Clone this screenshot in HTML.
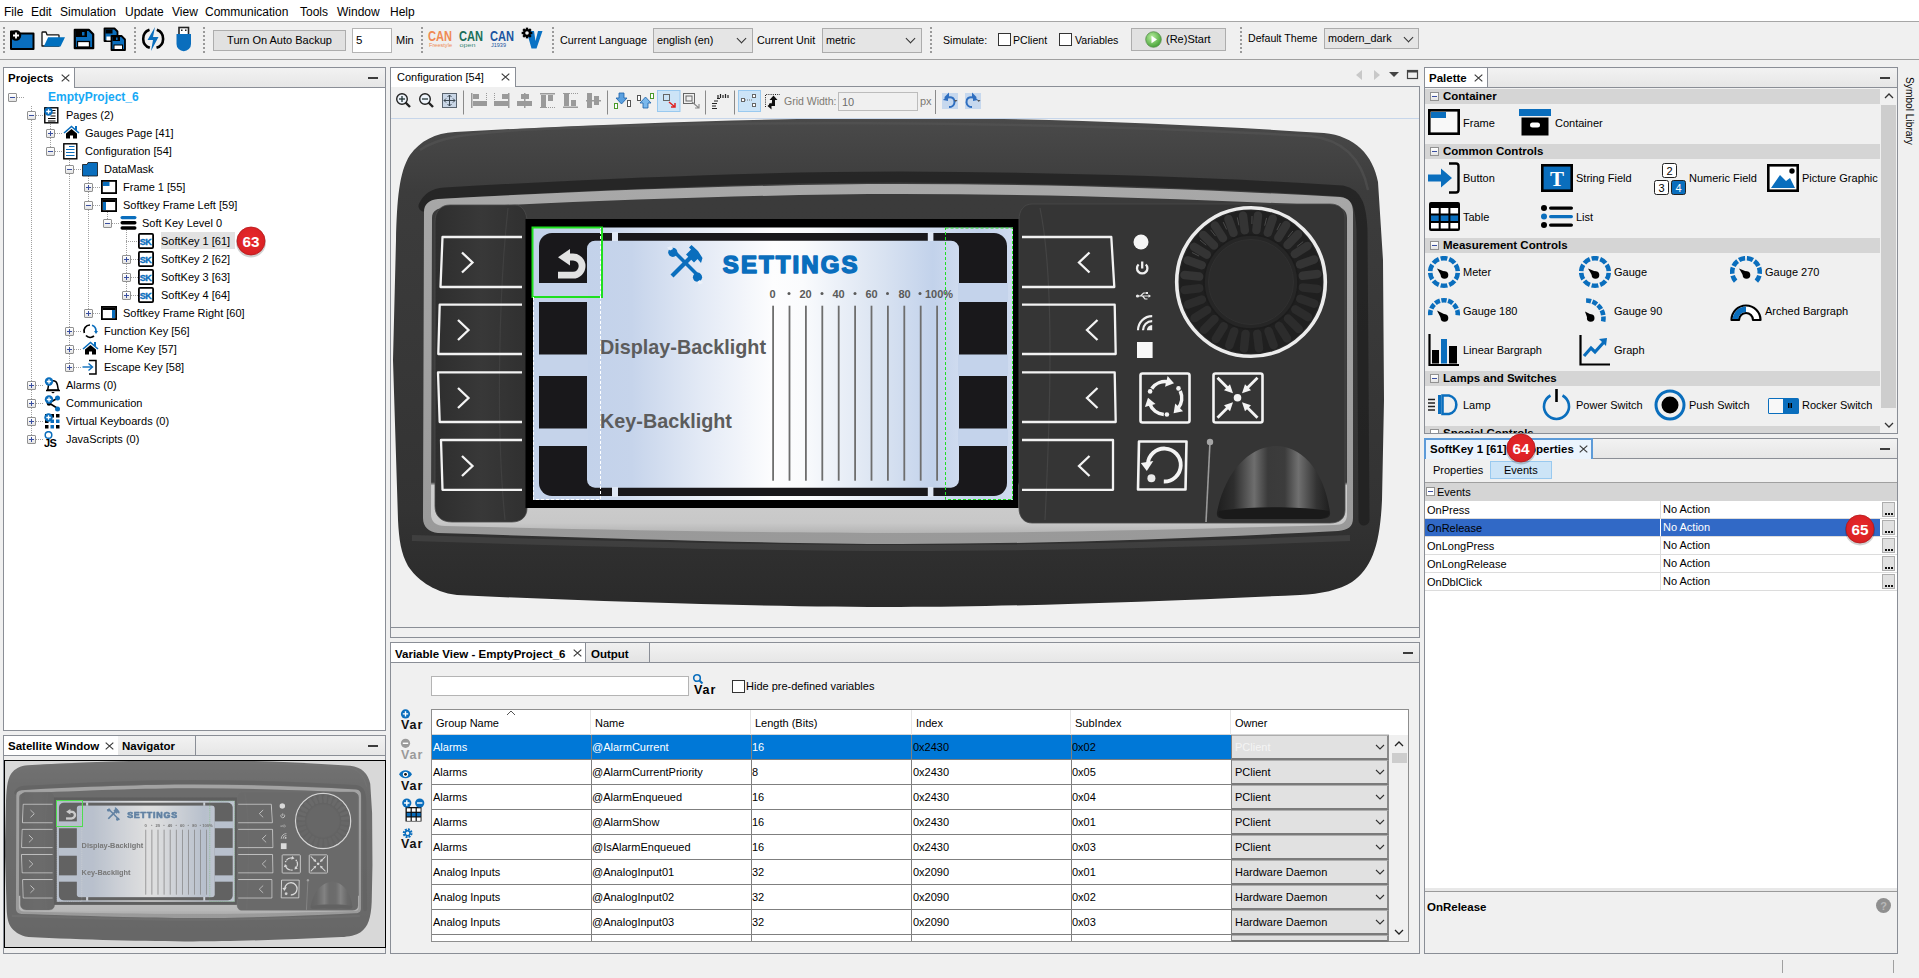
<!DOCTYPE html>
<html><head><meta charset="utf-8">
<style>
*{box-sizing:border-box}
html,body{margin:0;padding:0}
body{width:1919px;height:978px;background:#f0f0f0;position:relative;overflow:hidden;font-family:"Liberation Sans",sans-serif;font-size:11px;color:#000}
.a{position:absolute}
.t{position:absolute;white-space:nowrap;line-height:14px}
.pnl{position:absolute;border:1px solid #8a8e96;background:#fff}
.tabbar{position:absolute;left:0;right:0;top:0;height:20px;background:linear-gradient(#f2f2f2,#e6e6e6);border-bottom:1px solid #8a8e96}
.tab{position:absolute;top:0;height:20px;background:#fff;border-right:1px solid #8a8e96;font-weight:bold;font-size:11.5px;line-height:21px;padding-left:4px;white-space:nowrap}
.tab .x{position:absolute;top:0;font-weight:normal;font-size:13px}
.min{position:absolute;width:10px;height:2px;background:#3c3c3c}
.grip{position:absolute;width:2px;background:repeating-linear-gradient(#9a9a9a 0 2px,transparent 2px 4px)}
.btn{position:absolute;border:1px solid #adadad;background:#e1e1e1;text-align:center;font-size:12px}
.inp{position:absolute;border:1px solid #b4b4b4;background:#fff;font-size:12px;padding-left:3px}
.sel{position:absolute;border:1px solid #acacac;background:#e5e5e5;font-size:12px;padding-left:3px}
.chev{position:absolute;width:7px;height:7px;border-right:1px solid #333;border-bottom:1px solid #333;transform:rotate(45deg)}
.cb{position:absolute;width:13px;height:13px;border:1px solid #333;background:#fff}
</style></head>
<body>
<!-- MENU BAR -->
<div class="a" style="left:0;top:0;width:1919px;height:22px;background:#fff;border-bottom:1px solid #a6a6a6"></div>
<div class="t" style="left:4px;top:5px;font-size:12px">File</div>
<div class="t" style="left:31px;top:5px;font-size:12px">Edit</div>
<div class="t" style="left:60px;top:5px;font-size:12px">Simulation</div>
<div class="t" style="left:125px;top:5px;font-size:12px">Update</div>
<div class="t" style="left:172px;top:5px;font-size:12px">View</div>
<div class="t" style="left:205px;top:5px;font-size:12px">Communication</div>
<div class="t" style="left:300px;top:5px;font-size:12px">Tools</div>
<div class="t" style="left:337px;top:5px;font-size:12px">Window</div>
<div class="t" style="left:390px;top:5px;font-size:12px">Help</div>

<!-- TOOLBAR -->
<div class="a" style="left:0;top:59px;width:1919px;height:1px;background:#a0a0a0"></div>

<div class="grip" style="left:3px;top:27px;height:26px"></div>
<svg class="a" style="left:9px;top:27px" width="27" height="24" viewBox="0 0 27 24">
 <path d="M2 4.5 h7 l2 2 h13.5 v15.5 h-22.5z" fill="#0a6ebd" stroke="#000" stroke-width="2" stroke-linejoin="round"/>
 <circle cx="7" cy="8.5" r="5.2" fill="#000"/>
 <path d="M7 5.5v6M4 8.5h6" stroke="#fff" stroke-width="1.8"/>
</svg>
<svg class="a" style="left:40px;top:29px" width="26" height="20" viewBox="40 29 26 20">
 <path d="M42 46 V32.8 Q42 32 42.8 32 H46 L47 34.8 H58.2 Q59 34.8 59 35.6 V46z" fill="#fff" stroke="#111" stroke-width="1.3" stroke-linejoin="round"/>
 <path d="M43.8 46.6 L48.1 37.2 H65 L60.5 46.6z" fill="#0070bf"/>
</svg>
<svg class="a" style="left:73px;top:28px" width="22" height="22" viewBox="0 0 22 22">
 <path d="M1.8 1.8 h14 l4.4 4.4 v14 h-18.4z" fill="#0a6ebd" stroke="#000" stroke-width="2.2" stroke-linejoin="round"/>
 <rect x="3" y="3" width="11" height="6" fill="#000"/><rect x="9" y="4" width="2.5" height="3.5" fill="#0a6ebd"/>
 <rect x="4.5" y="13.5" width="12" height="5.5" fill="#fff" stroke="#000" stroke-width="1.3"/>
</svg>
<svg class="a" style="left:103px;top:27px" width="25" height="25" viewBox="0 0 25 25">
 <path d="M1.5 1.5 h10 l3 3 v9.5 h-13z" fill="#0a6ebd" stroke="#000" stroke-width="1.8" stroke-linejoin="round"/>
 <rect x="2.5" y="2.5" width="7" height="4" fill="#000"/>
 <rect x="3.5" y="9.5" width="5" height="4" fill="#fff"/>
 <path d="M8.5 9 h10 l3.5 3.5 v10.5 h-13.5z" fill="#0a6ebd" stroke="#000" stroke-width="1.8" stroke-linejoin="round"/>
 <rect x="9.5" y="10" width="7.5" height="4" fill="#000"/><rect x="13" y="10.5" width="1.6" height="2.5" fill="#0a6ebd"/>
 <rect x="11" y="18" width="8.5" height="4.5" fill="#fff" stroke="#000" stroke-width="1"/>
</svg>
<div class="grip" style="left:134px;top:27px;height:26px"></div>
<svg class="a" style="left:141px;top:26px" width="25" height="26" viewBox="0 0 25 26">
 <path d="M8.5 3.8 A9.5 9.5 0 0 0 8.8 21.8" fill="none" stroke="#000" stroke-width="2.6"/>
 <path d="M15.8 3.8 A9.5 9.5 0 0 1 15.5 21.8" fill="none" stroke="#000" stroke-width="2.6"/>
 <path d="M14 1 L6.5 14 H12 L10 25 L17.5 11 H12z" fill="#0a6ebd"/>
</svg>
<svg class="a" style="left:176px;top:26px" width="16" height="26" viewBox="0 0 16 26">
 <rect x="3" y="1.5" width="9.5" height="8" fill="#fff" stroke="#222" stroke-width="1.6"/>
 <rect x="5" y="3.5" width="1.5" height="1.5" fill="#222"/><rect x="9" y="3.5" width="1.5" height="1.5" fill="#222"/>
 <path d="M0.5 8 H15 V18 A7.2 7.2 0 0 1 0.5 18z" fill="#0a6ebd"/>
</svg>
<div class="grip" style="left:203px;top:27px;height:26px"></div>
<div class="btn" style="left:213px;top:30px;width:133px;height:21px;line-height:19px;font-size:11px">Turn On Auto Backup</div>
<div class="inp" style="left:352px;top:28px;width:40px;height:25px;line-height:23px;font-size:11.5px">5</div>
<div class="t" style="left:396px;top:33px;font-size:11px">Min</div>
<div class="grip" style="left:421px;top:27px;height:26px"></div>
<svg class="a" style="left:420px;top:24px" width="130" height="32" viewBox="420 24 130 32">
 <g font-family="Liberation Sans" font-weight="bold" letter-spacing="0">
 <text x="428" y="41.2" font-size="14" fill="#ef8a54" textLength="24" lengthAdjust="spacingAndGlyphs">CAN</text>
 <text x="429" y="46.5" font-size="5.6" font-weight="normal" fill="#ef8a54" textLength="23" lengthAdjust="spacingAndGlyphs">Freestyle</text>
 <text x="459" y="41.2" font-size="14" fill="#1a6f5a" textLength="24" lengthAdjust="spacingAndGlyphs">CAN</text>
 <text x="459.5" y="46.5" font-size="6" font-weight="normal" fill="#3f8a78" textLength="16" lengthAdjust="spacingAndGlyphs">open</text>
 <text x="490" y="41.2" font-size="14" fill="#1b55a0" textLength="24" lengthAdjust="spacingAndGlyphs">CAN</text>
 <text x="491" y="46.5" font-size="6" font-weight="normal" fill="#1b55a0" textLength="15" lengthAdjust="spacingAndGlyphs">J1939</text>
 </g>
 <path d="M526.5 31 H534 L535.5 41 L538 31 H542.5 L536.5 48.5 H531.5z" fill="#0a72c4"/>
 <g transform="translate(527,33) scale(0.85)" fill="#000"><rect x="-1.4" y="-6.3" width="2.8" height="3" transform="rotate(0)"/><rect x="-1.4" y="-6.3" width="2.8" height="3" transform="rotate(45)"/><rect x="-1.4" y="-6.3" width="2.8" height="3" transform="rotate(90)"/><rect x="-1.4" y="-6.3" width="2.8" height="3" transform="rotate(135)"/><rect x="-1.4" y="-6.3" width="2.8" height="3" transform="rotate(180)"/><rect x="-1.4" y="-6.3" width="2.8" height="3" transform="rotate(225)"/><rect x="-1.4" y="-6.3" width="2.8" height="3" transform="rotate(270)"/><rect x="-1.4" y="-6.3" width="2.8" height="3" transform="rotate(315)"/><circle r="4.6"/></g>
 <circle cx="527" cy="33" r="1.8" fill="#f0f0f0"/>
</svg>
<div class="grip" style="left:552px;top:27px;height:26px"></div>
<div class="t" style="left:560px;top:33px;font-size:10.8px">Current Language</div>
<div class="sel" style="left:653px;top:28px;width:100px;height:25px;line-height:23px;font-size:10.8px">english (en)<div class="chev" style="left:84px;top:6px"></div></div>
<div class="t" style="left:757px;top:33px;font-size:10.8px">Current Unit</div>
<div class="sel" style="left:822px;top:28px;width:100px;height:25px;line-height:23px;font-size:10.8px">metric<div class="chev" style="left:84px;top:6px"></div></div>
<div class="grip" style="left:930px;top:27px;height:26px"></div>
<div class="t" style="left:943px;top:33px;font-size:10.6px">Simulate:</div>
<div class="cb" style="left:998px;top:33px"></div>
<div class="t" style="left:1013px;top:33px;font-size:10.6px">PClient</div>
<div class="cb" style="left:1059px;top:33px"></div>
<div class="t" style="left:1075px;top:33px;font-size:10.6px">Variables</div>
<div class="btn" style="left:1131px;top:28px;width:95px;height:23px;line-height:21px;text-align:left;padding-left:34px;font-size:11px">(Re)Start</div>
<svg class="a" style="left:1145px;top:31px" width="17" height="17" viewBox="0 0 17 17">
 <defs><radialGradient id="gg" cx="0.4" cy="0.35" r="0.7"><stop offset="0" stop-color="#b8eea0"/><stop offset="1" stop-color="#3f9e2f"/></radialGradient></defs>
 <circle cx="8.5" cy="8.5" r="7.8" fill="url(#gg)" stroke="#5a8f50" stroke-width="0.8"/>
 <path d="M6.5 4.8 L12 8.5 L6.5 12.2z" fill="#fff"/>
</svg>
<div class="grip" style="left:1240px;top:27px;height:26px"></div>
<div class="t" style="left:1248px;top:31px;font-size:10.6px">Default Theme</div>
<div class="sel" style="left:1324px;top:28px;width:95px;height:21px;line-height:19px;font-size:10.8px">modern_dark<div class="chev" style="left:80px;top:5px"></div></div>


<!-- PROJECTS PANEL -->
<div class="pnl" id="projects" style="left:3px;top:67px;width:383px;height:664px">
  <div class="tabbar"></div>
  <div class="tab" style="left:0;width:71px">Projects</div><svg class="a"  style="left:57px;top:6px" width="9" height="8" viewBox="0 0 9.3 8.5"><path d="M0.6 0.6 L8.7 7.9 M8.7 0.6 L0.6 7.9" stroke="#3a3a3a" stroke-width="1.25"/></svg>
  <div class="min" style="left:364px;top:9px"></div>
</div>

<!-- SATELLITE -->
<div class="pnl" id="sat" style="left:3px;top:735px;width:383px;height:219px;background:#f0f0f0">
  <div class="tabbar" style="height:20px"></div>
  <div class="tab" style="left:0;width:115px;height:19px;line-height:20px">Satellite Window</div><svg class="a" style="left:101px;top:6px" width="9" height="8" viewBox="0 0 9.3 8.5"><path d="M0.6 0.6 L8.7 7.9 M8.7 0.6 L0.6 7.9" stroke="#3a3a3a" stroke-width="1.25"/></svg>
  <div class="tab" style="left:114px;width:78px;height:19px;line-height:20px;background:linear-gradient(#f2f2f2,#e6e6e6)">Navigator</div>
  <div class="min" style="left:364px;top:9px"></div>
</div>

<!-- CONFIG EDITOR -->
<div class="pnl" id="config" style="left:390px;top:86px;width:1030px;height:552px;background:#f0f0f0"></div><div class="a" style="left:391px;top:627px;width:1028px;height:1px;background:#8a8e96"></div>

<!-- VARIABLE VIEW -->
<div class="pnl" id="var" style="left:390px;top:642px;width:1030px;height:312px;background:#f0f0f0">
  <div class="tabbar"></div>
</div>

<!-- PALETTE -->
<div class="pnl" id="palette" style="left:1424px;top:67px;width:474px;height:367px;background:#f0f0f0">
  <div class="tabbar"></div>
</div>

<!-- PROPERTIES -->
<div class="pnl" id="props" style="left:1424px;top:438px;width:474px;height:516px;background:#f0f0f0">
  <div class="tabbar"></div>
</div>

<!--TREE-->
<div class="a" style="left:31px;top:106px;width:1px;height:334px;background:repeating-linear-gradient(#a0a0a0 0 1px,transparent 1px 2px)"></div>
<div class="a" style="left:50px;top:122px;width:1px;height:30px;background:repeating-linear-gradient(#a0a0a0 0 1px,transparent 1px 2px)"></div>
<div class="a" style="left:69px;top:158px;width:1px;height:210px;background:repeating-linear-gradient(#a0a0a0 0 1px,transparent 1px 2px)"></div>
<div class="a" style="left:88px;top:176px;width:1px;height:138px;background:repeating-linear-gradient(#a0a0a0 0 1px,transparent 1px 2px)"></div>
<div class="a" style="left:107px;top:212px;width:1px;height:12px;background:repeating-linear-gradient(#a0a0a0 0 1px,transparent 1px 2px)"></div>
<div class="a" style="left:126px;top:230px;width:1px;height:66px;background:repeating-linear-gradient(#a0a0a0 0 1px,transparent 1px 2px)"></div>
<div class="a" style="left:13px;top:97px;width:11px;height:1px;background:repeating-linear-gradient(90deg,#a0a0a0 0 1px,transparent 1px 2px)"></div>
<div class="a" style="left:32px;top:115px;width:11px;height:1px;background:repeating-linear-gradient(90deg,#a0a0a0 0 1px,transparent 1px 2px)"></div>
<div class="a" style="left:51px;top:133px;width:11px;height:1px;background:repeating-linear-gradient(90deg,#a0a0a0 0 1px,transparent 1px 2px)"></div>
<div class="a" style="left:51px;top:151px;width:11px;height:1px;background:repeating-linear-gradient(90deg,#a0a0a0 0 1px,transparent 1px 2px)"></div>
<div class="a" style="left:70px;top:169px;width:11px;height:1px;background:repeating-linear-gradient(90deg,#a0a0a0 0 1px,transparent 1px 2px)"></div>
<div class="a" style="left:89px;top:187px;width:11px;height:1px;background:repeating-linear-gradient(90deg,#a0a0a0 0 1px,transparent 1px 2px)"></div>
<div class="a" style="left:89px;top:205px;width:11px;height:1px;background:repeating-linear-gradient(90deg,#a0a0a0 0 1px,transparent 1px 2px)"></div>
<div class="a" style="left:108px;top:223px;width:11px;height:1px;background:repeating-linear-gradient(90deg,#a0a0a0 0 1px,transparent 1px 2px)"></div>
<div class="a" style="left:126px;top:241px;width:12px;height:1px;background:repeating-linear-gradient(90deg,#a0a0a0 0 1px,transparent 1px 2px)"></div>
<div class="a" style="left:127px;top:259px;width:11px;height:1px;background:repeating-linear-gradient(90deg,#a0a0a0 0 1px,transparent 1px 2px)"></div>
<div class="a" style="left:127px;top:277px;width:11px;height:1px;background:repeating-linear-gradient(90deg,#a0a0a0 0 1px,transparent 1px 2px)"></div>
<div class="a" style="left:127px;top:295px;width:11px;height:1px;background:repeating-linear-gradient(90deg,#a0a0a0 0 1px,transparent 1px 2px)"></div>
<div class="a" style="left:89px;top:313px;width:11px;height:1px;background:repeating-linear-gradient(90deg,#a0a0a0 0 1px,transparent 1px 2px)"></div>
<div class="a" style="left:70px;top:331px;width:11px;height:1px;background:repeating-linear-gradient(90deg,#a0a0a0 0 1px,transparent 1px 2px)"></div>
<div class="a" style="left:70px;top:349px;width:11px;height:1px;background:repeating-linear-gradient(90deg,#a0a0a0 0 1px,transparent 1px 2px)"></div>
<div class="a" style="left:70px;top:367px;width:11px;height:1px;background:repeating-linear-gradient(90deg,#a0a0a0 0 1px,transparent 1px 2px)"></div>
<div class="a" style="left:32px;top:385px;width:11px;height:1px;background:repeating-linear-gradient(90deg,#a0a0a0 0 1px,transparent 1px 2px)"></div>
<div class="a" style="left:32px;top:403px;width:11px;height:1px;background:repeating-linear-gradient(90deg,#a0a0a0 0 1px,transparent 1px 2px)"></div>
<div class="a" style="left:32px;top:421px;width:11px;height:1px;background:repeating-linear-gradient(90deg,#a0a0a0 0 1px,transparent 1px 2px)"></div>
<div class="a" style="left:32px;top:439px;width:11px;height:1px;background:repeating-linear-gradient(90deg,#a0a0a0 0 1px,transparent 1px 2px)"></div>
<div class="a" style="left:8px;top:93px;width:9px;height:9px;border:1px solid #919191;border-radius:1px;background:linear-gradient(#fff,#e4e4e4)"><div class="a" style="left:1px;top:3px;width:5px;height:1px;background:#3a4fa0"></div></div>
<div class="t" style="left:48px;top:90px;font-size:12px;font-weight:bold;color:#17a9f5">EmptyProject_6</div>
<div class="a" style="left:27px;top:111px;width:9px;height:9px;border:1px solid #919191;border-radius:1px;background:linear-gradient(#fff,#e4e4e4)"><div class="a" style="left:1px;top:3px;width:5px;height:1px;background:#3a4fa0"></div></div>
<svg class="a" style="left:44px;top:107px" width="17" height="17" viewBox="0 0 17 17"><rect x="0.8" y="0.8" width="13" height="15" fill="#fff" stroke="#000" stroke-width="1.4"/><path d="M4 11.5h7.5M4 14h7.5M6.5 9h5M7 6h4.5M7 3.5h4.5" stroke="#000" stroke-width="1.1"/><circle cx="4.5" cy="4.5" r="4.2" fill="#0a6ebd"/><path d="M4.5 2.2v4.6M2.2 4.5h4.6" stroke="#fff" stroke-width="1.3"/></svg>
<div class="t" style="left:66px;top:108px;font-size:11px">Pages (2)</div>
<div class="a" style="left:46px;top:129px;width:9px;height:9px;border:1px solid #919191;border-radius:1px;background:linear-gradient(#fff,#e4e4e4)"><div class="a" style="left:1px;top:3px;width:5px;height:1px;background:#3a4fa0"></div><div class="a" style="left:3px;top:1px;width:1px;height:5px;background:#3a4fa0"></div></div>
<svg class="a" style="left:63px;top:125px" width="17" height="17" viewBox="0 0 17 17"><path d="M1 8 L8.5 1.5 L16 8" fill="none" stroke="#0a6ebd" stroke-width="1.6"/><rect x="12" y="1" width="2" height="4" fill="#0a6ebd"/><path d="M3 8.5 L8.5 4 L14 8.5 V13.5 H10 V10.5 H7 V13.5 H3z" fill="#000"/></svg>
<div class="t" style="left:85px;top:126px;font-size:11px">Gauges Page [41]</div>
<div class="a" style="left:46px;top:147px;width:9px;height:9px;border:1px solid #919191;border-radius:1px;background:linear-gradient(#fff,#e4e4e4)"><div class="a" style="left:1px;top:3px;width:5px;height:1px;background:#3a4fa0"></div></div>
<svg class="a" style="left:63px;top:143px" width="17" height="17" viewBox="0 0 17 17"><rect x="0.8" y="0.8" width="13" height="15" fill="#fff" stroke="#000" stroke-width="1.4"/><path d="M6 3.5h5.5M3 6.5h8.5M3 9.5h8.5M3 12.5h8.5" stroke="#0a6ebd" stroke-width="1.1"/></svg>
<div class="t" style="left:85px;top:144px;font-size:11px">Configuration [54]</div>
<div class="a" style="left:65px;top:165px;width:9px;height:9px;border:1px solid #919191;border-radius:1px;background:linear-gradient(#fff,#e4e4e4)"><div class="a" style="left:1px;top:3px;width:5px;height:1px;background:#3a4fa0"></div></div>
<svg class="a" style="left:82px;top:161px" width="17" height="17" viewBox="0 0 17 17"><path d="M0.5 3.5 L5 3.5 L6 1.5 H15.5 V15 H0.5z" fill="#0a6ebd" stroke="#111" stroke-width="0.8"/></svg>
<div class="t" style="left:104px;top:162px;font-size:11px">DataMask</div>
<div class="a" style="left:84px;top:183px;width:9px;height:9px;border:1px solid #919191;border-radius:1px;background:linear-gradient(#fff,#e4e4e4)"><div class="a" style="left:1px;top:3px;width:5px;height:1px;background:#3a4fa0"></div><div class="a" style="left:3px;top:1px;width:1px;height:5px;background:#3a4fa0"></div></div>
<svg class="a" style="left:101px;top:179px" width="17" height="17" viewBox="0 0 17 17"><rect x="0.9" y="1.9" width="14.2" height="12.2" fill="#fff" stroke="#000" stroke-width="1.8"/><rect x="2" y="3" width="6.5" height="4" fill="#0a6ebd"/></svg>
<div class="t" style="left:123px;top:180px;font-size:11px">Frame 1 [55]</div>
<div class="a" style="left:84px;top:201px;width:9px;height:9px;border:1px solid #919191;border-radius:1px;background:linear-gradient(#fff,#e4e4e4)"><div class="a" style="left:1px;top:3px;width:5px;height:1px;background:#3a4fa0"></div></div>
<svg class="a" style="left:101px;top:197px" width="17" height="17" viewBox="0 0 17 17"><rect x="0.9" y="1.9" width="14.2" height="12.2" fill="#fff" stroke="#000" stroke-width="1.8"/><rect x="1.5" y="2.5" width="13" height="2.5" fill="#000"/><rect x="2" y="5" width="3" height="8" fill="#0a6ebd"/></svg>
<div class="t" style="left:123px;top:198px;font-size:11px">Softkey Frame Left [59]</div>
<div class="a" style="left:103px;top:219px;width:9px;height:9px;border:1px solid #919191;border-radius:1px;background:linear-gradient(#fff,#e4e4e4)"><div class="a" style="left:1px;top:3px;width:5px;height:1px;background:#3a4fa0"></div></div>
<svg class="a" style="left:120px;top:215px" width="17" height="17" viewBox="0 0 17 17"><rect x="0.5" y="1" width="16" height="3.2" rx="1.6" fill="#0a6ebd"/><rect x="0.5" y="6" width="16" height="3.5" rx="1.7" fill="#000"/><rect x="0.5" y="11.3" width="16" height="3.5" rx="1.7" fill="#000"/></svg>
<div class="t" style="left:142px;top:216px;font-size:11px">Soft Key Level 0</div>
<svg class="a" style="left:138px;top:233px" width="17" height="17" viewBox="0 0 17 17"><rect x="0.9" y="0.9" width="14.2" height="14.2" rx="1" fill="#fff" stroke="#000" stroke-width="1.8"/><text x="7.6" y="11.6" font-family="Liberation Sans" font-weight="bold" font-size="9" fill="#0a6ebd" stroke="#0a6ebd" stroke-width="0.35" text-anchor="middle" letter-spacing="-0.4">SK</text></svg>
<div class="a" style="left:161px;top:232px;width:74px;height:17px;background:#e2e2e2"></div>
<div class="t" style="left:161px;top:234px;font-size:11px">SoftKey 1 [61]</div>
<div class="a" style="left:122px;top:255px;width:9px;height:9px;border:1px solid #919191;border-radius:1px;background:linear-gradient(#fff,#e4e4e4)"><div class="a" style="left:1px;top:3px;width:5px;height:1px;background:#3a4fa0"></div><div class="a" style="left:3px;top:1px;width:1px;height:5px;background:#3a4fa0"></div></div>
<svg class="a" style="left:138px;top:251px" width="17" height="17" viewBox="0 0 17 17"><rect x="0.9" y="0.9" width="14.2" height="14.2" rx="1" fill="#fff" stroke="#000" stroke-width="1.8"/><text x="7.6" y="11.6" font-family="Liberation Sans" font-weight="bold" font-size="9" fill="#0a6ebd" stroke="#0a6ebd" stroke-width="0.35" text-anchor="middle" letter-spacing="-0.4">SK</text></svg>
<div class="t" style="left:161px;top:252px;font-size:11px">SoftKey 2 [62]</div>
<div class="a" style="left:122px;top:273px;width:9px;height:9px;border:1px solid #919191;border-radius:1px;background:linear-gradient(#fff,#e4e4e4)"><div class="a" style="left:1px;top:3px;width:5px;height:1px;background:#3a4fa0"></div><div class="a" style="left:3px;top:1px;width:1px;height:5px;background:#3a4fa0"></div></div>
<svg class="a" style="left:138px;top:269px" width="17" height="17" viewBox="0 0 17 17"><rect x="0.9" y="0.9" width="14.2" height="14.2" rx="1" fill="#fff" stroke="#000" stroke-width="1.8"/><text x="7.6" y="11.6" font-family="Liberation Sans" font-weight="bold" font-size="9" fill="#0a6ebd" stroke="#0a6ebd" stroke-width="0.35" text-anchor="middle" letter-spacing="-0.4">SK</text></svg>
<div class="t" style="left:161px;top:270px;font-size:11px">SoftKey 3 [63]</div>
<div class="a" style="left:122px;top:291px;width:9px;height:9px;border:1px solid #919191;border-radius:1px;background:linear-gradient(#fff,#e4e4e4)"><div class="a" style="left:1px;top:3px;width:5px;height:1px;background:#3a4fa0"></div><div class="a" style="left:3px;top:1px;width:1px;height:5px;background:#3a4fa0"></div></div>
<svg class="a" style="left:138px;top:287px" width="17" height="17" viewBox="0 0 17 17"><rect x="0.9" y="0.9" width="14.2" height="14.2" rx="1" fill="#fff" stroke="#000" stroke-width="1.8"/><text x="7.6" y="11.6" font-family="Liberation Sans" font-weight="bold" font-size="9" fill="#0a6ebd" stroke="#0a6ebd" stroke-width="0.35" text-anchor="middle" letter-spacing="-0.4">SK</text></svg>
<div class="t" style="left:161px;top:288px;font-size:11px">SoftKey 4 [64]</div>
<div class="a" style="left:84px;top:309px;width:9px;height:9px;border:1px solid #919191;border-radius:1px;background:linear-gradient(#fff,#e4e4e4)"><div class="a" style="left:1px;top:3px;width:5px;height:1px;background:#3a4fa0"></div><div class="a" style="left:3px;top:1px;width:1px;height:5px;background:#3a4fa0"></div></div>
<svg class="a" style="left:101px;top:305px" width="17" height="17" viewBox="0 0 17 17"><rect x="0.9" y="1.9" width="14.2" height="12.2" fill="#fff" stroke="#000" stroke-width="1.8"/><rect x="1.5" y="2.5" width="13" height="2.5" fill="#000"/><rect x="11" y="5" width="3" height="8" fill="#0a6ebd"/></svg>
<div class="t" style="left:123px;top:306px;font-size:11px">Softkey Frame Right [60]</div>
<div class="a" style="left:65px;top:327px;width:9px;height:9px;border:1px solid #919191;border-radius:1px;background:linear-gradient(#fff,#e4e4e4)"><div class="a" style="left:1px;top:3px;width:5px;height:1px;background:#3a4fa0"></div><div class="a" style="left:3px;top:1px;width:1px;height:5px;background:#3a4fa0"></div></div>
<svg class="a" style="left:82px;top:323px" width="17" height="17" viewBox="0 0 17 17"><path d="M8 2 A6 6 0 0 0 2.3 10" fill="none" stroke="#000" stroke-width="1.7"/><path d="M4 12.5 A6 6 0 0 0 12 13" fill="none" stroke="#000" stroke-width="1.7"/><path d="M10 2.3 A6 6 0 0 1 14 8" fill="none" stroke="#0a6ebd" stroke-width="1.7"/><path d="M12 8 l2 3 l2 -3z" fill="#0a6ebd"/></svg>
<div class="t" style="left:104px;top:324px;font-size:11px">Function Key [56]</div>
<div class="a" style="left:65px;top:345px;width:9px;height:9px;border:1px solid #919191;border-radius:1px;background:linear-gradient(#fff,#e4e4e4)"><div class="a" style="left:1px;top:3px;width:5px;height:1px;background:#3a4fa0"></div><div class="a" style="left:3px;top:1px;width:1px;height:5px;background:#3a4fa0"></div></div>
<svg class="a" style="left:82px;top:341px" width="17" height="17" viewBox="0 0 17 17"><path d="M1 8 L8.5 1.5 L16 8" fill="none" stroke="#0a6ebd" stroke-width="1.6"/><rect x="12" y="1" width="2" height="4" fill="#0a6ebd"/><path d="M3 8.5 L8.5 4 L14 8.5 V13.5 H10 V10.5 H7 V13.5 H3z" fill="#000"/></svg>
<div class="t" style="left:104px;top:342px;font-size:11px">Home Key [57]</div>
<div class="a" style="left:65px;top:363px;width:9px;height:9px;border:1px solid #919191;border-radius:1px;background:linear-gradient(#fff,#e4e4e4)"><div class="a" style="left:1px;top:3px;width:5px;height:1px;background:#3a4fa0"></div><div class="a" style="left:3px;top:1px;width:1px;height:5px;background:#3a4fa0"></div></div>
<svg class="a" style="left:82px;top:359px" width="17" height="17" viewBox="0 0 17 17"><path d="M0.5 8 H10" stroke="#0a6ebd" stroke-width="1.4"/><path d="M6.5 4.5 L10.5 8 L6.5 11.5" fill="none" stroke="#0a6ebd" stroke-width="1.4"/><path d="M7 1.5 H14 V15 H7" fill="none" stroke="#000" stroke-width="1.5"/></svg>
<div class="t" style="left:104px;top:360px;font-size:11px">Escape Key [58]</div>
<div class="a" style="left:27px;top:381px;width:9px;height:9px;border:1px solid #919191;border-radius:1px;background:linear-gradient(#fff,#e4e4e4)"><div class="a" style="left:1px;top:3px;width:5px;height:1px;background:#3a4fa0"></div><div class="a" style="left:3px;top:1px;width:1px;height:5px;background:#3a4fa0"></div></div>
<svg class="a" style="left:44px;top:377px" width="17" height="17" viewBox="0 0 17 17"><path d="M3.5 13 C4.5 11 4 6 6.5 4.5 C7.5 3.5 10.5 3.5 11.5 4.5 C14 6 13.5 11 14.5 13z" fill="#fff" stroke="#000" stroke-width="1.5"/><path d="M2 13.5h14" stroke="#000" stroke-width="1.5"/><path d="M7.5 15 a1.5 1.2 0 0 0 3 0" fill="#000"/><circle cx="5" cy="4.5" r="4.2" fill="#0a6ebd"/><path d="M5 2.3v4.4M2.8 4.5h4.4" stroke="#fff" stroke-width="1.3"/></svg>
<div class="t" style="left:66px;top:378px;font-size:11px">Alarms (0)</div>
<div class="a" style="left:27px;top:399px;width:9px;height:9px;border:1px solid #919191;border-radius:1px;background:linear-gradient(#fff,#e4e4e4)"><div class="a" style="left:1px;top:3px;width:5px;height:1px;background:#3a4fa0"></div><div class="a" style="left:3px;top:1px;width:1px;height:5px;background:#3a4fa0"></div></div>
<svg class="a" style="left:44px;top:395px" width="17" height="17" viewBox="0 0 17 17"><path d="M5 8 L13 3.5 M5 8 L13 13" stroke="#000" stroke-width="1.6"/><circle cx="13.5" cy="3" r="2.5" fill="#0a6ebd"/><circle cx="13.5" cy="14" r="2.5" fill="#0a6ebd"/><circle cx="5" cy="8.5" r="2.3" fill="#000"/><circle cx="5" cy="4.5" r="4.2" fill="#0a6ebd"/><path d="M5 2.3v4.4M2.8 4.5h4.4" stroke="#fff" stroke-width="1.3"/></svg>
<div class="t" style="left:66px;top:396px;font-size:11px">Communication</div>
<div class="a" style="left:27px;top:417px;width:9px;height:9px;border:1px solid #919191;border-radius:1px;background:linear-gradient(#fff,#e4e4e4)"><div class="a" style="left:1px;top:3px;width:5px;height:1px;background:#3a4fa0"></div><div class="a" style="left:3px;top:1px;width:1px;height:5px;background:#3a4fa0"></div></div>
<svg class="a" style="left:44px;top:413px" width="17" height="17" viewBox="0 0 17 17"><rect x="1.0" y="1.0" width="3.5" height="3.5" fill="#000"/><rect x="6.5" y="1.0" width="3.5" height="3.5" fill="#000"/><rect x="12.0" y="1.0" width="3.5" height="3.5" fill="#000"/><rect x="1.0" y="6.5" width="3.5" height="3.5" fill="#000"/><rect x="6.5" y="6.5" width="3.5" height="3.5" fill="#0a6ebd"/><rect x="12.0" y="6.5" width="3.5" height="3.5" fill="#0a6ebd"/><rect x="1.0" y="12.0" width="3.5" height="3.5" fill="#000"/><rect x="6.5" y="12.0" width="3.5" height="3.5" fill="#0a6ebd"/><rect x="12.0" y="12.0" width="3.5" height="3.5" fill="#000"/><circle cx="4.5" cy="4.5" r="4.2" fill="#0a6ebd"/><path d="M4.5 2.3v4.4M2.3 4.5h4.4" stroke="#fff" stroke-width="1.3"/></svg>
<div class="t" style="left:66px;top:414px;font-size:11px">Virtual Keyboards (0)</div>
<div class="a" style="left:27px;top:435px;width:9px;height:9px;border:1px solid #919191;border-radius:1px;background:linear-gradient(#fff,#e4e4e4)"><div class="a" style="left:1px;top:3px;width:5px;height:1px;background:#3a4fa0"></div><div class="a" style="left:3px;top:1px;width:1px;height:5px;background:#3a4fa0"></div></div>
<svg class="a" style="left:44px;top:431px" width="17" height="17" viewBox="0 0 17 17"><text x="0" y="16" font-family="Liberation Sans" font-weight="bold" font-size="11" fill="#000" letter-spacing="-0.5">JS</text><circle cx="4.5" cy="4" r="3.3" fill="none" stroke="#0a6ebd" stroke-width="1.5"/></svg>
<div class="t" style="left:66px;top:432px;font-size:11px">JavaScripts (0)</div>
<!--/TREE-->
<!--DEVICE-->
<svg class="a" style="left:391px;top:112px" width="1000" height="505" viewBox="391 112 1000 505">
<defs>
<linearGradient id="body" x1="0" y1="0" x2="0" y2="1"><stop offset="0" stop-color="#4a4a4a"/><stop offset="0.15" stop-color="#3c3c3c"/><stop offset="0.8" stop-color="#333"/><stop offset="1" stop-color="#2a2a2a"/></linearGradient>
<linearGradient id="rim" x1="0" y1="0" x2="0" y2="1"><stop offset="0" stop-color="#a8a8a8"/><stop offset="1" stop-color="#999"/></linearGradient>
<linearGradient id="face" gradientUnits="userSpaceOnUse" x1="0" y1="194" x2="0" y2="533"><stop offset="0" stop-color="#3b3b3b"/><stop offset="0.85" stop-color="#3a3a3a"/><stop offset="0.86" stop-color="#cfcfcf"/><stop offset="0.97" stop-color="#c8c8c8"/><stop offset="1" stop-color="#b5b5b5"/></linearGradient>
<linearGradient id="scr" x1="0" y1="0" x2="1" y2="0"><stop offset="0" stop-color="#c3d2ea"/><stop offset="0.12" stop-color="#c6d4eb"/><stop offset="0.3" stop-color="#e2e9f5"/><stop offset="0.5" stop-color="#fdfdfe"/><stop offset="0.58" stop-color="#fafbfd"/><stop offset="0.8" stop-color="#d8e2f1"/><stop offset="0.93" stop-color="#c2d2eb"/><stop offset="1" stop-color="#cfdbef"/></linearGradient>
<linearGradient id="panelL" x1="0" y1="0" x2="1" y2="0"><stop offset="0" stop-color="#2e2e2e"/><stop offset="0.5" stop-color="#383838"/><stop offset="1" stop-color="#303030"/></linearGradient>
<linearGradient id="hump" x1="0" y1="0" x2="1" y2="0"><stop offset="0" stop-color="#1e1e1e"/><stop offset="0.15" stop-color="#2e2e2e"/><stop offset="0.33" stop-color="#6e6e6e"/><stop offset="0.45" stop-color="#3a3a3a"/><stop offset="0.6" stop-color="#3c3c3c"/><stop offset="0.72" stop-color="#707070"/><stop offset="0.88" stop-color="#333"/><stop offset="1" stop-color="#1e1e1e"/></linearGradient>
</defs>
<path d="M455 132 C600 124 760 118 900 118 C1050 118 1200 125 1324 133 C1355 136 1373 155 1378 182 L1383 260 L1384 400 L1382 500 C1380 545 1372 568 1352 582 C1340 590 1320 594 1300 595 C1150 602 1000 607 900 607 C780 607 600 602 457 595 C432 592 416 578 408 566 C401 553 399 540 398 520 L393 360 L396 240 C397 200 399 172 410 155 C420 141 435 133 455 132 Z" fill="url(#body)"/>
<path d="M420 150 C440 136 470 134 520 130 C700 121 1000 119 1310 136 C1345 140 1362 160 1368 190" fill="none" stroke="#555" stroke-width="2.5" opacity="0.55"/>
<path d="M424 206 C428 198 433 194 445 193 C600 184 780 177 900 177 C1100 178 1250 185 1342 191 C1358 194 1361 208 1362 230 L1364 520" fill="none" stroke="#1c1c1c" stroke-width="11" opacity="0.7" stroke-linecap="round"/>
<path d="M412 538 C600 544 780 548 900 548 C1050 548 1200 544 1350 538" fill="none" stroke="#4a4a4a" stroke-width="6" opacity="0.6"/>
<path d="M438 199 C600 190 780 184 900 184 C1050 184 1200 189 1340 197 C1349 198 1353 203 1353 212 L1353 518 C1353 527 1348 530 1338 531 C1200 538 1050 544 900 544 C780 544 600 538 438 533 C429 532 423 527 423 518 L424 212 C424 204 429 200 438 199 Z" fill="url(#rim)"/>
<path d="M445 208 C600 200 780 194 900 194 C1050 194 1200 199 1334 206 C1342 207 1347 210 1347 218 L1347 514 C1347 522 1343 525 1334 525 C1200 529 1050 533 900 533 C780 533 600 530 445 526 C436 526 431 522 431 514 L432 218 C432 211 437 208 445 208 Z" fill="url(#face)"/>
<path d="M450 205 H515 C522 205 527 212 527 222 V508 C527 517 521 522 512 522 H452 C441 522 435 516 435 506 V222 C435 211 441 205 450 205 Z" fill="url(#panelL)" stroke="#4a4a4a" stroke-width="0.8"/>
<path d="M1032 204 H1330 C1339 204 1345 209 1345 218 V510 C1345 518 1340 523 1330 523 H1032 C1024 523 1019 517 1019 508 V220 C1019 210 1024 204 1032 204 Z" fill="#353535" stroke="#4a4a4a" stroke-width="0.8"/>
<path d="M1040 208 C1055 280 1050 420 1045 520" stroke="#444" stroke-width="1.2" fill="none"/>
<path d="M508 208 C500 280 495 420 505 520" stroke="#404040" stroke-width="1.2" fill="none"/>
<rect x="525.5" y="219" width="493" height="289" fill="#000"/>
<rect x="533" y="227.5" width="480" height="272.5" fill="url(#scr)"/>
<rect x="539" y="233" width="468" height="263" rx="13" fill="#19181b"/>
<rect x="587" y="240.7" width="372" height="247" rx="8" fill="url(#scr)"/>
<rect x="538" y="283" width="50" height="19" fill="#c5d3ea"/>
<rect x="958" y="283" width="50" height="19" fill="#c4d3eb"/>
<rect x="538" y="354.5" width="50" height="21.5" fill="#c5d3ea"/>
<rect x="958" y="354.5" width="50" height="21.5" fill="#c4d3eb"/>
<rect x="538" y="428.5" width="50" height="17.5" fill="#c5d3ea"/>
<rect x="958" y="428.5" width="50" height="17.5" fill="#c4d3eb"/>
<rect x="612" y="232" width="6" height="9" fill="#dfe7f4"/>
<rect x="612" y="487" width="6" height="10" fill="#dfe7f4"/>
<rect x="927.8" y="232" width="5.600000000000023" height="9" fill="#dfe7f4"/>
<rect x="927.8" y="487" width="5.600000000000023" height="10" fill="#dfe7f4"/>
<path d="M558 275.2 H573 A9.1 9.1 0 0 0 573 257 H568" fill="none" stroke="#e2e2e2" stroke-width="6.8"/>
<path d="M558 257.2 L570 249 L570 265.6 Z" fill="#e2e2e2"/>
<rect x="532.5" y="227.5" width="69.5" height="69.5" fill="none" stroke="#1fe01f" stroke-width="2"/>
<path d="M533.5 297 V499.5 H600.5 V228" fill="none" stroke="#fff" stroke-width="1" stroke-dasharray="3 2"/>
<rect x="945.5" y="228" width="67" height="271.5" fill="none" stroke="#22e022" stroke-width="1" stroke-dasharray="3 2"/>
<g fill="#0a6ebd" stroke="none"><path d="M670.5 274.5 L673.5 277.5 L692 259 L689 256z"/><path d="M686 254.5 L691 249.5 L689 247.5 L691.5 245 L698 251 L702.5 258 L701 263 L697.5 259 L694 262.5z"/><path d="M674 254 L676.5 251.5 L698 273 L695.5 275.5z"/><circle cx="672.8" cy="252.3" r="4.6"/><circle cx="697.5" cy="277.2" r="4.6"/></g>
<path d="M667 247.5 L670 250.5 L673 249 L671.5 246z" fill="#e6ecf7"/><path d="M703 283 L700 280 L697.5 281.5 L699 284.5z" fill="#eef2f9"/>
<text x="722.8" y="272.8" font-family="Liberation Sans" font-weight="bold" font-size="24" letter-spacing="2.1" fill="#0a6ebd" stroke="#0a6ebd" stroke-width="1.6" stroke-linejoin="round">SETTINGS</text>
<g font-family="Liberation Sans" font-weight="bold" font-size="11" fill="#5a5a5a" text-anchor="middle">
<text x="772.5" y="297.5">0</text>
<text x="805.5" y="297.5">20</text>
<text x="838.5" y="297.5">40</text>
<text x="871.5" y="297.5">60</text>
<text x="904.5" y="297.5">80</text>
<text x="939" y="297.5">100%</text>
</g>
<circle cx="789" cy="293.5" r="1.5" fill="#5a5a5a"/>
<circle cx="822" cy="293.5" r="1.5" fill="#5a5a5a"/>
<circle cx="855" cy="293.5" r="1.5" fill="#5a5a5a"/>
<circle cx="887.5" cy="293.5" r="1.5" fill="#5a5a5a"/>
<circle cx="920" cy="293.5" r="1.5" fill="#5a5a5a"/>
<rect x="772.2" y="305.7" width="1.8" height="175" fill="#6e6e6e"/>
<rect x="788.6" y="305.7" width="1.8" height="175" fill="#6e6e6e"/>
<rect x="805.0" y="305.7" width="1.8" height="175" fill="#6e6e6e"/>
<rect x="821.4" y="305.7" width="1.8" height="175" fill="#6e6e6e"/>
<rect x="837.8" y="305.7" width="1.8" height="175" fill="#6e6e6e"/>
<rect x="854.2" y="305.7" width="1.8" height="175" fill="#6e6e6e"/>
<rect x="870.6" y="305.7" width="1.8" height="175" fill="#6e6e6e"/>
<rect x="887.0" y="305.7" width="1.8" height="175" fill="#6e6e6e"/>
<rect x="903.4" y="305.7" width="1.8" height="175" fill="#6e6e6e"/>
<rect x="919.8" y="305.7" width="1.8" height="175" fill="#6e6e6e"/>
<rect x="936.2" y="305.7" width="1.8" height="175" fill="#6e6e6e"/>
<text x="600" y="354" font-family="Liberation Sans" font-weight="bold" font-size="19.8" fill="#5c5c5c">Display-Backlight</text>
<text x="600" y="428.3" font-family="Liberation Sans" font-weight="bold" font-size="19.8" fill="#5c5c5c">Key-Backlight</text>
<path d="M522 237 H442.5 L440.5 287 H522" fill="none" stroke="#f2f2f2" stroke-width="2.3" stroke-linejoin="round"/>
<path d="M462 252.5 L472.5 262.5 L462 272.5" fill="none" stroke="#f4f4f4" stroke-width="2.3"/>
<path d="M522 304.7 H439.7 L438.3 354 H522" fill="none" stroke="#f2f2f2" stroke-width="2.3" stroke-linejoin="round"/>
<path d="M458 320 L468.5 330 L458 340" fill="none" stroke="#f4f4f4" stroke-width="2.3"/>
<path d="M522 372.4 H438 L439.7 422 H522" fill="none" stroke="#f2f2f2" stroke-width="2.3" stroke-linejoin="round"/>
<path d="M458 388 L468.5 398 L458 408" fill="none" stroke="#f4f4f4" stroke-width="2.3"/>
<path d="M522 440 H441 L442.5 489.8 H522" fill="none" stroke="#f2f2f2" stroke-width="2.3" stroke-linejoin="round"/>
<path d="M462 456 L472.5 466 L462 476" fill="none" stroke="#f4f4f4" stroke-width="2.3"/>
<path d="M1022 237 H1111.3 L1114.3 287 H1022" fill="none" stroke="#f2f2f2" stroke-width="2.3" stroke-linejoin="round"/>
<path d="M1089.5 252.5 L1079 262.5 L1089.5 272.5" fill="none" stroke="#f4f4f4" stroke-width="2.3"/>
<path d="M1022 304.7 H1114.7 L1115.7 354 H1022" fill="none" stroke="#f2f2f2" stroke-width="2.3" stroke-linejoin="round"/>
<path d="M1097.5 320 L1087 330 L1097.5 340" fill="none" stroke="#f4f4f4" stroke-width="2.3"/>
<path d="M1022 372.4 H1114.7 L1115.7 422 H1022" fill="none" stroke="#f2f2f2" stroke-width="2.3" stroke-linejoin="round"/>
<path d="M1097.5 388 L1087 398 L1097.5 408" fill="none" stroke="#f4f4f4" stroke-width="2.3"/>
<path d="M1022 440 H1113 L1113 489.8 H1022" fill="none" stroke="#f2f2f2" stroke-width="2.3" stroke-linejoin="round"/>
<path d="M1089.5 456 L1079 466 L1089.5 476" fill="none" stroke="#f4f4f4" stroke-width="2.3"/>
<circle cx="1141" cy="242" r="7.5" fill="#f5f5f5"/>
<path d="M1138.6 264.5 A5.2 5.2 0 1 0 1145.8 264.5" fill="none" stroke="#f0f0f0" stroke-width="2.3"/><path d="M1142.2 261.5 V268.5" stroke="#f0f0f0" stroke-width="2.3"/>
<path d="M1137 296 H1149.5 M1140.5 296 L1143.5 293 H1146 M1142.5 296 L1145 299 H1147.5" fill="none" stroke="#e8e8e8" stroke-width="1.2"/><circle cx="1137.5" cy="296" r="1.6" fill="#e8e8e8"/><path d="M1148.5 294.3 L1151 296 L1148.5 297.7z" fill="#e8e8e8"/><rect x="1146" y="292" width="2" height="2" fill="#e8e8e8"/>
<path d="M1152.2 330.3 V325 A5.3 5.3 0 0 0 1146.9 330.3z" fill="#f0f0f0"/><path d="M1143 330.3 A9.2 9.2 0 0 1 1152.2 321.1" fill="none" stroke="#f0f0f0" stroke-width="2.2"/><path d="M1138 330.3 A14.2 14.2 0 0 1 1152.2 316.1" fill="none" stroke="#f0f0f0" stroke-width="2.2"/>
<rect x="1137" y="342" width="15.6" height="16" fill="#f8f8f8"/>
<circle cx="1251" cy="282" r="74.3" fill="#2a2a2a" stroke="#ececec" stroke-width="3.6"/>
<circle cx="1251" cy="282" r="71.5" fill="#1f1f1f"/>
<line x1="1302.7" y1="287.4" x2="1317.6" y2="289.0" stroke="#2c2c2c" stroke-width="8.5" stroke-linecap="round"/>
<line x1="1300.2" y1="298.8" x2="1314.4" y2="303.7" stroke="#2c2c2c" stroke-width="8.5" stroke-linecap="round"/>
<line x1="1295.2" y1="309.3" x2="1308.0" y2="317.2" stroke="#2c2c2c" stroke-width="8.5" stroke-linecap="round"/>
<line x1="1288.0" y1="318.5" x2="1298.7" y2="329.0" stroke="#2c2c2c" stroke-width="8.5" stroke-linecap="round"/>
<line x1="1279.0" y1="325.8" x2="1287.1" y2="338.5" stroke="#2c2c2c" stroke-width="8.5" stroke-linecap="round"/>
<line x1="1268.5" y1="331.0" x2="1273.6" y2="345.1" stroke="#2c2c2c" stroke-width="8.5" stroke-linecap="round"/>
<line x1="1257.2" y1="333.6" x2="1259.0" y2="348.5" stroke="#2c2c2c" stroke-width="8.5" stroke-linecap="round"/>
<line x1="1245.6" y1="333.7" x2="1244.0" y2="348.6" stroke="#2c2c2c" stroke-width="8.5" stroke-linecap="round"/>
<line x1="1234.2" y1="331.2" x2="1229.3" y2="345.4" stroke="#2c2c2c" stroke-width="8.5" stroke-linecap="round"/>
<line x1="1223.7" y1="326.2" x2="1215.8" y2="339.0" stroke="#2c2c2c" stroke-width="8.5" stroke-linecap="round"/>
<line x1="1214.5" y1="319.0" x2="1204.0" y2="329.7" stroke="#2c2c2c" stroke-width="8.5" stroke-linecap="round"/>
<line x1="1207.2" y1="310.0" x2="1194.5" y2="318.1" stroke="#2c2c2c" stroke-width="8.5" stroke-linecap="round"/>
<line x1="1202.0" y1="299.5" x2="1187.9" y2="304.6" stroke="#2c2c2c" stroke-width="8.5" stroke-linecap="round"/>
<line x1="1199.4" y1="288.2" x2="1184.5" y2="290.0" stroke="#2c2c2c" stroke-width="8.5" stroke-linecap="round"/>
<line x1="1199.3" y1="276.6" x2="1184.4" y2="275.0" stroke="#343434" stroke-width="8.5" stroke-linecap="round"/>
<line x1="1201.8" y1="265.2" x2="1187.6" y2="260.3" stroke="#343434" stroke-width="8.5" stroke-linecap="round"/>
<line x1="1206.8" y1="254.7" x2="1194.0" y2="246.8" stroke="#343434" stroke-width="8.5" stroke-linecap="round"/>
<line x1="1199.1" y1="256.1" x2="1192.0" y2="252.5" stroke="#4a4a4a" stroke-width="1"/>
<line x1="1214.0" y1="245.5" x2="1203.3" y2="235.0" stroke="#343434" stroke-width="8.5" stroke-linecap="round"/>
<line x1="1206.2" y1="245.2" x2="1200.0" y2="240.1" stroke="#4a4a4a" stroke-width="1"/>
<line x1="1223.0" y1="238.2" x2="1214.9" y2="225.5" stroke="#343434" stroke-width="8.5" stroke-linecap="round"/>
<line x1="1215.5" y1="236.1" x2="1210.6" y2="229.8" stroke="#4a4a4a" stroke-width="1"/>
<line x1="1233.5" y1="233.0" x2="1228.4" y2="218.9" stroke="#343434" stroke-width="8.5" stroke-linecap="round"/>
<line x1="1226.6" y1="229.4" x2="1223.2" y2="222.1" stroke="#4a4a4a" stroke-width="1"/>
<line x1="1244.8" y1="230.4" x2="1243.0" y2="215.5" stroke="#343434" stroke-width="8.5" stroke-linecap="round"/>
<line x1="1238.9" y1="225.3" x2="1237.3" y2="217.4" stroke="#4a4a4a" stroke-width="1"/>
<line x1="1256.4" y1="230.3" x2="1258.0" y2="215.4" stroke="#343434" stroke-width="8.5" stroke-linecap="round"/>
<line x1="1251.9" y1="224.0" x2="1252.0" y2="216.0" stroke="#4a4a4a" stroke-width="1"/>
<line x1="1267.8" y1="232.8" x2="1272.7" y2="218.6" stroke="#343434" stroke-width="8.5" stroke-linecap="round"/>
<line x1="1264.7" y1="225.7" x2="1266.6" y2="217.9" stroke="#4a4a4a" stroke-width="1"/>
<line x1="1278.3" y1="237.8" x2="1286.2" y2="225.0" stroke="#343434" stroke-width="8.5" stroke-linecap="round"/>
<line x1="1276.9" y1="230.1" x2="1280.5" y2="223.0" stroke="#4a4a4a" stroke-width="1"/>
<line x1="1287.5" y1="245.0" x2="1298.0" y2="234.3" stroke="#343434" stroke-width="8.5" stroke-linecap="round"/>
<line x1="1287.8" y1="237.2" x2="1292.9" y2="231.0" stroke="#4a4a4a" stroke-width="1"/>
<line x1="1294.8" y1="254.0" x2="1307.5" y2="245.9" stroke="#343434" stroke-width="8.5" stroke-linecap="round"/>
<line x1="1296.9" y1="246.5" x2="1303.2" y2="241.6" stroke="#4a4a4a" stroke-width="1"/>
<line x1="1300.0" y1="264.5" x2="1314.1" y2="259.4" stroke="#343434" stroke-width="8.5" stroke-linecap="round"/>
<line x1="1302.6" y1="275.8" x2="1317.5" y2="274.0" stroke="#343434" stroke-width="8.5" stroke-linecap="round"/>
<circle cx="1251" cy="282" r="47" fill="#262626" stroke="#1c1c1c" stroke-width="1.5"/>
<circle cx="1251" cy="282" r="42.5" fill="#2b2b2b" stroke="#303030" stroke-width="1"/>
<rect x="1140.5" y="373.5" width="49" height="49" rx="2" fill="none" stroke="#f4f4f4" stroke-width="2.6"/>
<rect x="1213.5" y="373.5" width="49" height="49" rx="2" fill="none" stroke="#f4f4f4" stroke-width="2.6"/>
<path d="M1139 441.5 H1186.5 L1185.5 489.5 H1138z" fill="none" stroke="#f4f4f4" stroke-width="2.6" stroke-linejoin="round"/>
<path d="M1151.7 388.6 A16.5 16.5 0 0 1 1168.1 381.9" fill="none" stroke="#f4f4f4" stroke-width="3.6"/>
<path d="M1174.0 383.3 L1167.6 376.0 L1165.0 386.7z" fill="#f4f4f4"/>
<path d="M1180.2 391.1 A16.5 16.5 0 0 1 1177.8 408.7" fill="none" stroke="#f4f4f4" stroke-width="3.6"/>
<path d="M1173.6 413.2 L1183.1 411.2 L1175.2 403.6z" fill="#f4f4f4"/>
<path d="M1163.8 414.5 A16.5 16.5 0 0 1 1149.7 403.7" fill="none" stroke="#f4f4f4" stroke-width="3.6"/>
<path d="M1148.0 397.8 L1144.9 407.0 L1155.5 404.0z" fill="#f4f4f4"/>
<circle cx="1150.1" cy="391.4" r="2.3" fill="#f4f4f4"/>
<circle cx="1178.5" cy="388.4" r="2.3" fill="#f4f4f4"/>
<circle cx="1166.9" cy="414.5" r="2.3" fill="#f4f4f4"/>
<circle cx="1237.5" cy="397.7" r="3.8" fill="#f4f4f4"/>
<line x1="1217.5" y1="377.7" x2="1229.5" y2="389.7" stroke="#f4f4f4" stroke-width="2.8"/>
<path d="M1233.0 393.2 L1224.0 390.2 L1230.0 384.2z" fill="#f4f4f4"/>
<line x1="1217.5" y1="417.7" x2="1229.5" y2="405.7" stroke="#f4f4f4" stroke-width="2.8"/>
<path d="M1233.0 402.2 L1224.0 405.2 L1230.0 411.2z" fill="#f4f4f4"/>
<line x1="1257.5" y1="377.7" x2="1245.5" y2="389.7" stroke="#f4f4f4" stroke-width="2.8"/>
<path d="M1242.0 393.2 L1251.0 390.2 L1245.0 384.2z" fill="#f4f4f4"/>
<line x1="1257.5" y1="417.7" x2="1245.5" y2="405.7" stroke="#f4f4f4" stroke-width="2.8"/>
<path d="M1242.0 402.2 L1251.0 405.2 L1245.0 411.2z" fill="#f4f4f4"/>
<path d="M1147.8 464 A16.5 16.5 0 1 1 1163.8 481.5" fill="none" stroke="#f4f4f4" stroke-width="3.8"/>
<path d="M1140.8 463 L1153.3 461 L1146.8 471z" fill="#f4f4f4"/>
<circle cx="1151.3999999999999" cy="478.2" r="4" fill="#eaeaea"/>
<line x1="1210" y1="442" x2="1206" y2="522" stroke="#9a9a9a" stroke-width="1.6"/><circle cx="1210" cy="442" r="3.2" fill="#a5a5a5"/>
<path d="M1217 512 C1226 468 1252 446 1276 446 C1300 446 1324 468 1330 512 C1331 518 1326 519 1318 519 H1228 C1220 519 1216 518 1217 512 Z" fill="url(#hump)"/>
<path d="M1219 511 C1250 506 1300 506 1329 511 C1330 516 1326 519 1318 519 H1228 C1221 519 1217 517 1219 511 Z" fill="#1a1a1a"/>
</svg>
<!--/DEVICE-->
<!--CFGTB-->
<div class="a" style="left:390px;top:67px;width:126px;height:20px;background:#fff;border:1px solid #8a8e96;border-bottom:none"></div>
<div class="t" style="left:397px;top:70px;font-size:11px">Configuration [54]</div>
<svg class="a" style="left:501px;top:73px" width="9" height="8" viewBox="0 0 9.3 8.5"><path d="M0.6 0.6 L8.7 7.9 M8.7 0.6 L0.6 7.9" stroke="#3a3a3a" stroke-width="1.25"/></svg>
<svg class="a" style="left:1352px;top:68px" width="70" height="14" viewBox="0 0 70 14"><path d="M10 2 L4 7 L10 12z" fill="#c8c8c8"/><path d="M22 2 L28 7 L22 12z" fill="#c8c8c8"/><path d="M37 4 H47 L42 9z" fill="#444"/><rect x="55.5" y="2.5" width="10" height="8" fill="none" stroke="#444" stroke-width="1.2"/><rect x="55.5" y="2.5" width="10" height="2" fill="#444"/></svg>
<svg class="a" style="left:391px;top:87px" width="600" height="30" viewBox="391 87 600 30">
<circle cx="402" cy="99" r="5.3" fill="#eef4fb" stroke="#222" stroke-width="1.4"/><path d="M405.5 102.5 L410 107" stroke="#222" stroke-width="2.4"/><path d="M399 99 h6" stroke="#233" stroke-width="1.3"/><path d="M402 96 v6" stroke="#233" stroke-width="1.3"/>
<circle cx="425" cy="99" r="5.3" fill="#eef4fb" stroke="#222" stroke-width="1.4"/><path d="M428.5 102.5 L433 107" stroke="#222" stroke-width="2.4"/><path d="M422 99 h6" stroke="#233" stroke-width="1.3"/>
<rect x="442.5" y="93.5" width="14" height="14" fill="#c9d6e6" stroke="#59636e" stroke-width="1"/><path d="M449.5 95v11M444 100.5h11M447.5 97l2-2 2 2M447.5 104l2 2 2-2M446 98.5l-2 2 2 2M453 98.5l2 2-2 2" stroke="#3a4650" stroke-width="1" fill="none"/>
<rect x="463" y="90.5" width="1" height="24" fill="#8a8a8a"/>
<rect x="471" y="93" width="1.5" height="15" fill="#9a9a9a"/><rect x="473" y="94" width="6" height="5" fill="#9a9a9a"/><rect x="473" y="101" width="14" height="5" fill="#9a9a9a"/><path d="M486.5 93v8" stroke="#9a9a9a" stroke-dasharray="1 1"/>
<rect x="508" y="93" width="1.5" height="15" fill="#9a9a9a"/><rect x="502" y="94" width="6" height="5" fill="#9a9a9a"/><rect x="494" y="101" width="14" height="5" fill="#9a9a9a"/><path d="M494.5 93v8" stroke="#9a9a9a" stroke-dasharray="1 1"/>
<rect x="524" y="93" width="1.5" height="15" fill="#9a9a9a"/><rect x="521" y="94" width="8" height="5" fill="#9a9a9a"/><rect x="517" y="101" width="15" height="5" fill="#9a9a9a"/>
<rect x="540" y="93" width="15" height="1.5" fill="#9a9a9a"/><rect x="541" y="95" width="5" height="13" fill="#9a9a9a"/><rect x="548" y="95" width="5" height="6" fill="#9a9a9a"/><path d="M540 107.5h15" stroke="#9a9a9a" stroke-dasharray="1 1"/>
<rect x="563" y="106.5" width="15" height="1.5" fill="#9a9a9a"/><rect x="564" y="93" width="5" height="13" fill="#9a9a9a"/><rect x="571" y="100" width="5" height="6" fill="#9a9a9a"/><path d="M563 93.5h15" stroke="#9a9a9a" stroke-dasharray="1 1"/>
<rect x="586" y="100" width="15" height="1.5" fill="#9a9a9a"/><rect x="587" y="93" width="5" height="15" fill="#9a9a9a"/><rect x="594" y="96" width="5" height="9" fill="#9a9a9a"/>
<rect x="607" y="90.5" width="1" height="24" fill="#8a8a8a"/>
<rect x="614.5" y="103.5" width="3" height="5" fill="#fff" stroke="#4a9a2a"/><rect x="627.5" y="100.5" width="3" height="6" fill="#fff" stroke="#555"/><path d="M619 93 h5 v5 h3 l-5.5 6 l-5.5 -6 h3z" fill="#5aa0e0" stroke="#1b5fa8" stroke-width="0.8"/>
<rect x="637.5" y="95.5" width="3" height="5" fill="#fff" stroke="#555"/><rect x="650.5" y="93.5" width="3" height="5" fill="#fff" stroke="#4a9a2a"/><path d="M643 108 h5 v-5 h3 l-5.5 -6 l-5.5 6 h3z" fill="#7ab8ec" stroke="#1b5fa8" stroke-width="0.8"/>
<rect x="657.5" y="90.5" width="22.5" height="21" fill="#cce4f7" stroke="#99c9ef"/>
<rect x="663.5" y="94.5" width="6" height="6" fill="none" stroke="#666"/><path d="M669 102 l6 5 M675 103 v4 h-4" stroke="#e02020" stroke-width="1.5" fill="none"/>
<rect x="683.5" y="93.5" width="11" height="10" fill="none" stroke="#666"/><rect x="686" y="96" width="6" height="5" fill="none" stroke="#666"/><path d="M692 102 l7 6 M699 104 v4 h-4" stroke="#888" stroke-width="1.1" fill="none"/>
<rect x="705" y="90.5" width="1" height="24" fill="#8a8a8a"/>
<path d="M712 108.5h5 M712 106h4 M712 103.5h5 M714 101h4 M717 98.5h3" stroke="#222" stroke-width="1"/><path d="M718 98v-3 M720.5 98v-4 M723 98v-3 M725.5 98v-4 M728 98v-3" stroke="#222" stroke-width="1.2"/>
<rect x="734" y="90.5" width="1" height="24" fill="#8a8a8a"/>
<rect x="738.5" y="90.5" width="22" height="21" fill="#cce4f7" stroke="#99c9ef"/>
<rect x="741.5" y="98.5" width="3" height="3" fill="#fff" stroke="#666"/><rect x="752.5" y="94.5" width="3" height="3" fill="#fff" stroke="#666"/><rect x="752.5" y="103.5" width="3" height="3" fill="#fff" stroke="#666"/><path d="M745 100h7" stroke="#777" stroke-dasharray="1 1"/>
<path d="M765.5 107 V94.5 H780" stroke="#222" stroke-dasharray="1 1.2" fill="none"/><path d="M769 106 h6 v-6 h2.5 l-4 -4.5 l-4 4.5 h2.5 v3.5 h-3z" fill="#111"/><path d="M767.5 106 l4 -3.5 v7z" fill="#111"/>
</svg>
<div class="t" style="left:784px;top:94px;font-size:10.5px;color:#7d7a73">Grid Width:</div>
<div class="a" style="left:838px;top:92px;width:80px;height:19px;border:1px solid #bcbcbc;background:#f0f0f0;font-size:11px;color:#6d6d6d;padding-left:3px;line-height:18px">10</div>
<div class="t" style="left:920px;top:94px;font-size:11px;color:#7d7a73">px</div>
<div class="a" style="left:935px;top:90px;width:1px;height:24px;background:#8a8a8a"></div>
<svg class="a" style="left:941px;top:92px" width="42" height="18" viewBox="0 0 42 18"><rect x="1" y="1" width="16" height="16" fill="#c6d8ee"/><rect x="24" y="1" width="16" height="16" fill="#c6d8ee"/><path d="M4 6 l3 -3 v2.5 c4 -1 7 1 6.5 5 c-0.3 3 -3 4.5 -5.5 4.5" fill="none" stroke="#2f6fc0" stroke-width="2"/><path d="M2 8 l5 -5 v6z" fill="#2f6fc0"/><path d="M13 8 h3.5 l-1.75 2z" fill="#555"/><path d="M35 6 l-3 -3 v2.5 c-4 -1 -7 1 -6.5 5 c0.3 3 3 4.5 5.5 4.5" fill="none" stroke="#2f6fc0" stroke-width="2"/><path d="M37 8 l-5 -5 v6z" fill="#2f6fc0"/><path d="M36 8 h3.5 l-1.75 2z" fill="#555"/></svg>
<div class="a" style="left:391px;top:118px;width:1028px;height:1px;background:#c7d6ea"></div>
<!--/CFGTB-->
<!--VAR-->
<div class="a" style="left:391px;top:643px;width:195px;height:19px;background:#fff;border-right:1px solid #8a8e96"></div>
<div class="t" style="left:395px;top:647px;font-size:11.5px;font-weight:bold">Variable View - EmptyProject_6</div>
<svg class="a" style="left:573px;top:649px" width="9" height="8" viewBox="0 0 9.3 8.5"><path d="M0.6 0.6 L8.7 7.9 M8.7 0.6 L0.6 7.9" stroke="#3a3a3a" stroke-width="1.25"/></svg>
<div class="a" style="left:586px;top:643px;width:64px;height:19px;border-right:1px solid #8a8e96;background:linear-gradient(#f0f0f0,#e3e3e3)"></div>
<div class="t" style="left:591px;top:647px;font-size:11.5px;font-weight:bold">Output</div>
<div class="min" style="left:1403px;top:652px"></div>
<div class="a" style="left:431px;top:676px;width:258px;height:20px;background:#fff;border:1px solid #b4b4b4"></div>
<svg class="a" style="left:692px;top:673px" width="12" height="12" viewBox="0 0 12 12"><circle cx="5" cy="5" r="3.3" fill="none" stroke="#0a6ebd" stroke-width="1.6"/><path d="M7.5 7.5 L10.5 10.5" stroke="#0a6ebd" stroke-width="2"/></svg>
<div class="t" style="left:694px;top:683px;font-size:12.5px;font-weight:bold;letter-spacing:0.9px">Var</div>
<div class="cb" style="left:732px;top:680px;border-color:#333"></div>
<div class="t" style="left:746px;top:679px;font-size:11px">Hide pre-defined variables</div>
<svg class="a" style="left:398px;top:706px" width="30" height="146" viewBox="398 706 30 146"><circle cx="405.5" cy="713.9" r="4.6" fill="#0a6ebd"/><path d="M405.5 711.2v5.4M402.8 713.9h5.4" stroke="#fff" stroke-width="1.4"/><circle cx="405.5" cy="743.3" r="4.6" fill="#9a9a9a"/><path d="M402.8 743.3h5.4" stroke="#fff" stroke-width="1.4"/><path d="M399 774.3 C402 769 409 769 412 774.3 C409 779.5 402 779.5 399 774.3z" fill="#0a6ebd"/><circle cx="405.5" cy="774.3" r="2.6" fill="#fff"/><circle cx="405.5" cy="774.3" r="1.4" fill="#111"/><rect x="405.5" y="807" width="16" height="14.5" fill="#111"/><rect x="406.8" y="808.3" width="3.8" height="3.4" fill="#fff"/><rect x="411.8" y="808.3" width="3.8" height="3.4" fill="#fff"/><rect x="416.8" y="808.3" width="3.8" height="3.4" fill="#fff"/><rect x="406.8" y="812.9" width="3.8" height="3.4" fill="#0a6ebd"/><rect x="411.8" y="812.9" width="3.8" height="3.4" fill="#0a6ebd"/><rect x="416.8" y="812.9" width="3.8" height="3.4" fill="#0a6ebd"/><rect x="406.8" y="817.5" width="3.8" height="3.4" fill="#fff"/><rect x="411.8" y="817.5" width="3.8" height="3.4" fill="#fff"/><rect x="416.8" y="817.5" width="3.8" height="3.4" fill="#fff"/><circle cx="406.8" cy="803" r="4.6" fill="#0a6ebd"/><path d="M406.8 800.3v5.4M404.1 803h5.4" stroke="#fff" stroke-width="1.4"/><circle cx="419.7" cy="803" r="4.6" fill="#0a6ebd"/><path d="M417 803h5.4" stroke="#fff" stroke-width="1.4"/><circle cx="407.6" cy="833.2" r="3.6" fill="none" stroke="#0a6ebd" stroke-width="2.6" stroke-dasharray="1.8 1"/><circle cx="407.6" cy="833.2" r="2.4" fill="none" stroke="#0a6ebd" stroke-width="1.4"/></svg>
<div class="t" style="left:401px;top:718px;font-size:12.5px;font-weight:bold;letter-spacing:0.9px;color:#111">Var</div>
<div class="t" style="left:401px;top:747.5px;font-size:12.5px;font-weight:bold;letter-spacing:0.9px;color:#9a9a9a">Var</div>
<div class="t" style="left:401px;top:778.5px;font-size:12.5px;font-weight:bold;letter-spacing:0.9px;color:#111">Var</div>
<div class="t" style="left:401px;top:836.9px;font-size:12.5px;font-weight:bold;letter-spacing:0.9px;color:#111">Var</div>
<div class="a" style="left:431px;top:709px;width:978px;height:233px;background:#fff;border:1px solid #8e8e8e"></div>
<div class="a" style="left:432px;top:710px;width:957px;height:25px;background:#fff;border-bottom:1px solid #d5d5d5"></div>
<div class="a" style="left:590px;top:710px;width:1px;height:25px;background:#e5e5e5"></div>
<div class="a" style="left:750px;top:710px;width:1px;height:25px;background:#e5e5e5"></div>
<div class="a" style="left:911px;top:710px;width:1px;height:25px;background:#e5e5e5"></div>
<div class="a" style="left:1070px;top:710px;width:1px;height:25px;background:#e5e5e5"></div>
<div class="a" style="left:1230px;top:710px;width:1px;height:25px;background:#e5e5e5"></div>
<div class="t" style="left:436px;top:716px;font-size:11px">Group Name</div>
<div class="t" style="left:595px;top:716px;font-size:11px">Name</div>
<div class="t" style="left:755px;top:716px;font-size:11px">Length (Bits)</div>
<div class="t" style="left:916px;top:716px;font-size:11px">Index</div>
<div class="t" style="left:1075px;top:716px;font-size:11px">SubIndex</div>
<div class="t" style="left:1235px;top:716px;font-size:11px">Owner</div>
<svg class="a" style="left:506px;top:710px" width="10" height="6" viewBox="0 0 10 6"><path d="M1 5 L5 1 L9 5" fill="none" stroke="#555" stroke-width="1"/></svg>
<div class="a" style="left:432px;top:735px;width:799px;height:25px;background:#0078d7"></div>
<div class="t" style="left:433px;top:740px;font-size:11px;color:#fff">Alarms</div>
<div class="t" style="left:592px;top:740px;font-size:11px;color:#fff">@AlarmCurrent</div>
<div class="t" style="left:752px;top:740px;font-size:11px;color:#fff">16</div>
<div class="t" style="left:913px;top:740px;font-size:11px;color:#000">0x2430</div>
<div class="t" style="left:1072px;top:740px;font-size:11px;color:#000">0x02</div>
<div class="a" style="left:1231px;top:735px;width:158px;height:25px;background:#e1e1e1;border:1px solid #adadad;border-bottom:2px solid #7a7a7a;border-right:2px solid #8a8a8a"></div>
<div class="t" style="left:1235px;top:740px;font-size:11px;color:#f4f4f4">PClient</div>
<svg class="a" style="left:1375px;top:744px" width="10" height="6" viewBox="0 0 10 6"><path d="M1 1 L5 5 L9 1" fill="none" stroke="#333" stroke-width="1.1"/></svg>
<div class="t" style="left:433px;top:765px;font-size:11px;color:#000">Alarms</div>
<div class="t" style="left:592px;top:765px;font-size:11px;color:#000">@AlarmCurrentPriority</div>
<div class="t" style="left:752px;top:765px;font-size:11px;color:#000">8</div>
<div class="t" style="left:913px;top:765px;font-size:11px;color:#000">0x2430</div>
<div class="t" style="left:1072px;top:765px;font-size:11px;color:#000">0x05</div>
<div class="a" style="left:1231px;top:760px;width:158px;height:25px;background:#e1e1e1;border:1px solid #adadad;border-bottom:2px solid #7a7a7a;border-right:2px solid #8a8a8a"></div>
<div class="t" style="left:1235px;top:765px;font-size:11px;color:#000">PClient</div>
<svg class="a" style="left:1375px;top:769px" width="10" height="6" viewBox="0 0 10 6"><path d="M1 1 L5 5 L9 1" fill="none" stroke="#333" stroke-width="1.1"/></svg>
<div class="t" style="left:433px;top:790px;font-size:11px;color:#000">Alarms</div>
<div class="t" style="left:592px;top:790px;font-size:11px;color:#000">@AlarmEnqueued</div>
<div class="t" style="left:752px;top:790px;font-size:11px;color:#000">16</div>
<div class="t" style="left:913px;top:790px;font-size:11px;color:#000">0x2430</div>
<div class="t" style="left:1072px;top:790px;font-size:11px;color:#000">0x04</div>
<div class="a" style="left:1231px;top:785px;width:158px;height:25px;background:#e1e1e1;border:1px solid #adadad;border-bottom:2px solid #7a7a7a;border-right:2px solid #8a8a8a"></div>
<div class="t" style="left:1235px;top:790px;font-size:11px;color:#000">PClient</div>
<svg class="a" style="left:1375px;top:794px" width="10" height="6" viewBox="0 0 10 6"><path d="M1 1 L5 5 L9 1" fill="none" stroke="#333" stroke-width="1.1"/></svg>
<div class="t" style="left:433px;top:815px;font-size:11px;color:#000">Alarms</div>
<div class="t" style="left:592px;top:815px;font-size:11px;color:#000">@AlarmShow</div>
<div class="t" style="left:752px;top:815px;font-size:11px;color:#000">16</div>
<div class="t" style="left:913px;top:815px;font-size:11px;color:#000">0x2430</div>
<div class="t" style="left:1072px;top:815px;font-size:11px;color:#000">0x01</div>
<div class="a" style="left:1231px;top:810px;width:158px;height:25px;background:#e1e1e1;border:1px solid #adadad;border-bottom:2px solid #7a7a7a;border-right:2px solid #8a8a8a"></div>
<div class="t" style="left:1235px;top:815px;font-size:11px;color:#000">PClient</div>
<svg class="a" style="left:1375px;top:819px" width="10" height="6" viewBox="0 0 10 6"><path d="M1 1 L5 5 L9 1" fill="none" stroke="#333" stroke-width="1.1"/></svg>
<div class="t" style="left:433px;top:840px;font-size:11px;color:#000">Alarms</div>
<div class="t" style="left:592px;top:840px;font-size:11px;color:#000">@IsAlarmEnqueued</div>
<div class="t" style="left:752px;top:840px;font-size:11px;color:#000">16</div>
<div class="t" style="left:913px;top:840px;font-size:11px;color:#000">0x2430</div>
<div class="t" style="left:1072px;top:840px;font-size:11px;color:#000">0x03</div>
<div class="a" style="left:1231px;top:835px;width:158px;height:25px;background:#e1e1e1;border:1px solid #adadad;border-bottom:2px solid #7a7a7a;border-right:2px solid #8a8a8a"></div>
<div class="t" style="left:1235px;top:840px;font-size:11px;color:#000">PClient</div>
<svg class="a" style="left:1375px;top:844px" width="10" height="6" viewBox="0 0 10 6"><path d="M1 1 L5 5 L9 1" fill="none" stroke="#333" stroke-width="1.1"/></svg>
<div class="t" style="left:433px;top:865px;font-size:11px;color:#000">Analog Inputs</div>
<div class="t" style="left:592px;top:865px;font-size:11px;color:#000">@AnalogInput01</div>
<div class="t" style="left:752px;top:865px;font-size:11px;color:#000">32</div>
<div class="t" style="left:913px;top:865px;font-size:11px;color:#000">0x2090</div>
<div class="t" style="left:1072px;top:865px;font-size:11px;color:#000">0x01</div>
<div class="a" style="left:1231px;top:860px;width:158px;height:25px;background:#e1e1e1;border:1px solid #adadad;border-bottom:2px solid #7a7a7a;border-right:2px solid #8a8a8a"></div>
<div class="t" style="left:1235px;top:865px;font-size:11px;color:#000">Hardware Daemon</div>
<svg class="a" style="left:1375px;top:869px" width="10" height="6" viewBox="0 0 10 6"><path d="M1 1 L5 5 L9 1" fill="none" stroke="#333" stroke-width="1.1"/></svg>
<div class="t" style="left:433px;top:890px;font-size:11px;color:#000">Analog Inputs</div>
<div class="t" style="left:592px;top:890px;font-size:11px;color:#000">@AnalogInput02</div>
<div class="t" style="left:752px;top:890px;font-size:11px;color:#000">32</div>
<div class="t" style="left:913px;top:890px;font-size:11px;color:#000">0x2090</div>
<div class="t" style="left:1072px;top:890px;font-size:11px;color:#000">0x02</div>
<div class="a" style="left:1231px;top:885px;width:158px;height:25px;background:#e1e1e1;border:1px solid #adadad;border-bottom:2px solid #7a7a7a;border-right:2px solid #8a8a8a"></div>
<div class="t" style="left:1235px;top:890px;font-size:11px;color:#000">Hardware Daemon</div>
<svg class="a" style="left:1375px;top:894px" width="10" height="6" viewBox="0 0 10 6"><path d="M1 1 L5 5 L9 1" fill="none" stroke="#333" stroke-width="1.1"/></svg>
<div class="t" style="left:433px;top:915px;font-size:11px;color:#000">Analog Inputs</div>
<div class="t" style="left:592px;top:915px;font-size:11px;color:#000">@AnalogInput03</div>
<div class="t" style="left:752px;top:915px;font-size:11px;color:#000">32</div>
<div class="t" style="left:913px;top:915px;font-size:11px;color:#000">0x2090</div>
<div class="t" style="left:1072px;top:915px;font-size:11px;color:#000">0x03</div>
<div class="a" style="left:1231px;top:910px;width:158px;height:25px;background:#e1e1e1;border:1px solid #adadad;border-bottom:2px solid #7a7a7a;border-right:2px solid #8a8a8a"></div>
<div class="t" style="left:1235px;top:915px;font-size:11px;color:#000">Hardware Daemon</div>
<svg class="a" style="left:1375px;top:919px" width="10" height="6" viewBox="0 0 10 6"><path d="M1 1 L5 5 L9 1" fill="none" stroke="#333" stroke-width="1.1"/></svg>
<div class="a" style="left:1231px;top:935px;width:158px;height:7px;background:#e1e1e1;border:1px solid #adadad;border-bottom:2px solid #7a7a7a;border-right:2px solid #8a8a8a"></div>
<div class="a" style="left:432px;top:759px;width:799px;height:1px;background:#7f7f7f"></div>
<div class="a" style="left:432px;top:784px;width:799px;height:1px;background:#7f7f7f"></div>
<div class="a" style="left:432px;top:809px;width:799px;height:1px;background:#7f7f7f"></div>
<div class="a" style="left:432px;top:834px;width:799px;height:1px;background:#7f7f7f"></div>
<div class="a" style="left:432px;top:859px;width:799px;height:1px;background:#7f7f7f"></div>
<div class="a" style="left:432px;top:884px;width:799px;height:1px;background:#7f7f7f"></div>
<div class="a" style="left:432px;top:909px;width:799px;height:1px;background:#7f7f7f"></div>
<div class="a" style="left:432px;top:934px;width:799px;height:1px;background:#7f7f7f"></div>
<div class="a" style="left:591px;top:735px;width:1px;height:206px;background:#7f7f7f"></div>
<div class="a" style="left:751px;top:735px;width:1px;height:206px;background:#7f7f7f"></div>
<div class="a" style="left:911px;top:735px;width:1px;height:206px;background:#7f7f7f"></div>
<div class="a" style="left:1071px;top:735px;width:1px;height:206px;background:#7f7f7f"></div>
<div class="a" style="left:1231px;top:735px;width:1px;height:206px;background:#7f7f7f"></div>
<div class="a" style="left:1389px;top:735px;width:19px;height:206px;background:#f0f0f0"></div>
<svg class="a" style="left:1393px;top:740px" width="12" height="8" viewBox="0 0 12 8"><path d="M2 6 L6 2 L10 6" fill="none" stroke="#222" stroke-width="1.3"/></svg>
<div class="a" style="left:1392px;top:753px;width:15px;height:10px;background:#cdcdcd"></div>
<svg class="a" style="left:1393px;top:928px" width="12" height="8" viewBox="0 0 12 8"><path d="M2 2 L6 6 L10 2" fill="none" stroke="#222" stroke-width="1.3"/></svg>
<!--/VAR-->
<!--PAL-->
<div class="a" style="left:1425px;top:68px;width:63px;height:19px;background:#fff;border-right:1px solid #8a8e96"></div>
<div class="t" style="left:1429px;top:71px;font-size:11.5px;font-weight:bold">Palette</div>
<svg class="a" style="left:1474px;top:74px" width="9" height="8" viewBox="0 0 9.3 8.5"><path d="M0.6 0.6 L8.7 7.9 M8.7 0.6 L0.6 7.9" stroke="#3a3a3a" stroke-width="1.25"/></svg>
<div class="min" style="left:1880px;top:77px"></div>
<div class="a" style="left:1880px;top:88px;width:17px;height:345px;background:#f0f0f0"></div>
<svg class="a" style="left:1883px;top:92px" width="12" height="8" viewBox="0 0 12 8"><path d="M2 6 L6 2 L10 6" fill="none" stroke="#333" stroke-width="1.3"/></svg>
<div class="a" style="left:1881px;top:105px;width:15px;height:303px;background:#cdcdcd"></div>
<svg class="a" style="left:1883px;top:421px" width="12" height="8" viewBox="0 0 12 8"><path d="M2 2 L6 6 L10 2" fill="none" stroke="#333" stroke-width="1.3"/></svg>
<div class="a" style="left:1425px;top:89px;width:455px;height:15px;background:#d5d5d5"></div>
<div class="a" style="left:1430px;top:92px;width:9px;height:9px;border:1px solid #919191;background:linear-gradient(#fff,#e4e4e4)"><div class="a" style="left:1px;top:3px;width:5px;height:1px;background:#3a4fa0"></div></div>
<div class="t" style="left:1443px;top:89px;font-size:11.5px;font-weight:bold">Container</div>
<div class="a" style="left:1425px;top:144px;width:455px;height:15px;background:#d5d5d5"></div>
<div class="a" style="left:1430px;top:147px;width:9px;height:9px;border:1px solid #919191;background:linear-gradient(#fff,#e4e4e4)"><div class="a" style="left:1px;top:3px;width:5px;height:1px;background:#3a4fa0"></div></div>
<div class="t" style="left:1443px;top:144px;font-size:11.5px;font-weight:bold">Common Controls</div>
<div class="a" style="left:1425px;top:238px;width:455px;height:15px;background:#d5d5d5"></div>
<div class="a" style="left:1430px;top:241px;width:9px;height:9px;border:1px solid #919191;background:linear-gradient(#fff,#e4e4e4)"><div class="a" style="left:1px;top:3px;width:5px;height:1px;background:#3a4fa0"></div></div>
<div class="t" style="left:1443px;top:238px;font-size:11.5px;font-weight:bold">Measurement Controls</div>
<div class="a" style="left:1425px;top:371px;width:455px;height:15px;background:#d5d5d5"></div>
<div class="a" style="left:1430px;top:374px;width:9px;height:9px;border:1px solid #919191;background:linear-gradient(#fff,#e4e4e4)"><div class="a" style="left:1px;top:3px;width:5px;height:1px;background:#3a4fa0"></div></div>
<div class="t" style="left:1443px;top:371px;font-size:11.5px;font-weight:bold">Lamps and Switches</div>
<div class="a" style="left:1425px;top:426px;width:455px;height:7px;background:#d5d5d5;overflow:hidden"><div class="a" style="left:5px;top:3px;width:9px;height:9px;border:1px solid #919191;background:#fff"></div><div class="t" style="left:18px;top:0px;font-size:11.5px;font-weight:bold">Special Controls</div></div>
<svg class="a" style="left:1428px;top:107px" width="33" height="33" viewBox="0 0 33 33"><rect x="1.3" y="3.3" width="29.4" height="23.4" fill="#f8f8f8" stroke="#000" stroke-width="2.6"/><rect x="3" y="5" width="15" height="6" fill="#0a6ebd"/></svg>
<div class="t" style="left:1463px;top:116px;font-size:11px">Frame</div>
<svg class="a" style="left:1519px;top:107px" width="33" height="33" viewBox="0 0 33 33"><rect x="0" y="2" width="32" height="7" fill="#0a6ebd"/><rect x="2.5" y="10.5" width="27" height="18" fill="#000"/><rect x="11" y="15.5" width="10" height="5" rx="2.5" fill="#fff"/></svg>
<div class="t" style="left:1555px;top:116px;font-size:11px">Container</div>
<svg class="a" style="left:1428px;top:162px" width="33" height="33" viewBox="0 0 33 33"><path d="M21 1.5 H28 C29.5 1.5 30.5 2.5 30.5 4 V28 C30.5 29.5 29.5 30.5 28 30.5 H21" fill="none" stroke="#000" stroke-width="2.4"/><path d="M0 12.5 H13 V6.5 L24 16 L13 25.5 V19.5 H0z" fill="#0a6ebd"/></svg>
<div class="t" style="left:1463px;top:171px;font-size:11px">Button</div>
<svg class="a" style="left:1541px;top:162px" width="33" height="33" viewBox="0 0 33 33"><rect x="1.3" y="3.3" width="29.4" height="25.4" fill="#0a6ebd" stroke="#000" stroke-width="2.6"/><text x="16" y="24" font-family="Liberation Serif" font-weight="bold" font-size="21" fill="#fff" text-anchor="middle">T</text></svg>
<div class="t" style="left:1576px;top:171px;font-size:11px">String Field</div>
<svg class="a" style="left:1654px;top:162px" width="33" height="33" viewBox="0 0 33 33"><rect x="8.5" y="1.5" width="14" height="14" rx="2" fill="#fff" stroke="#222" stroke-width="1"/><text x="15.5" y="12.5" font-family="Liberation Sans" font-size="11" text-anchor="middle">2</text><rect x="0.5" y="18.5" width="14" height="14" rx="2" fill="#fff" stroke="#222" stroke-width="1"/><text x="7.5" y="29.5" font-family="Liberation Sans" font-size="11" text-anchor="middle">3</text><rect x="17.5" y="18.5" width="14" height="14" rx="2" fill="#0a6ebd" stroke="#222" stroke-width="1"/><text x="24.5" y="29.5" font-family="Liberation Sans" font-size="11" text-anchor="middle" fill="#fff">4</text></svg>
<div class="t" style="left:1689px;top:171px;font-size:11px">Numeric Field</div>
<svg class="a" style="left:1767px;top:162px" width="33" height="33" viewBox="0 0 33 33"><rect x="1.3" y="3.3" width="29.4" height="25.4" fill="#fff" stroke="#000" stroke-width="2.6"/><path d="M4 26 L13 13 L19 19 L23 16 L28 26z" fill="#0a6ebd"/><circle cx="25" cy="9" r="2.7" fill="#000"/></svg>
<div class="t" style="left:1802px;top:171px;font-size:11px">Picture Graphic</div>
<svg class="a" style="left:1428px;top:201px" width="33" height="33" viewBox="0 0 33 33"><rect x="1" y="1" width="31" height="29" rx="2" fill="#000"/><rect x="3.0" y="7.0" width="7.7" height="5.5" fill="#fff"/><rect x="12.7" y="7.0" width="7.7" height="5.5" fill="#fff"/><rect x="22.4" y="7.0" width="7.7" height="5.5" fill="#fff"/><rect x="3.0" y="14.5" width="7.7" height="5.5" fill="#0a6ebd"/><rect x="12.7" y="14.5" width="7.7" height="5.5" fill="#0a6ebd"/><rect x="22.4" y="14.5" width="7.7" height="5.5" fill="#0a6ebd"/><rect x="3.0" y="22.0" width="7.7" height="5.5" fill="#fff"/><rect x="12.7" y="22.0" width="7.7" height="5.5" fill="#fff"/><rect x="22.4" y="22.0" width="7.7" height="5.5" fill="#fff"/></svg>
<div class="t" style="left:1463px;top:210px;font-size:11px">Table</div>
<svg class="a" style="left:1541px;top:201px" width="33" height="33" viewBox="0 0 33 33"><circle cx="3" cy="7.0" r="3" fill="#000"/><rect x="8" y="5.5" width="24" height="3.2" rx="1.6" fill="#000"/><circle cx="3" cy="15.5" r="3" fill="#0a6ebd"/><rect x="8" y="14.0" width="24" height="3.2" rx="1.6" fill="#0a6ebd"/><circle cx="3" cy="24.0" r="3" fill="#000"/><rect x="8" y="22.5" width="24" height="3.2" rx="1.6" fill="#000"/></svg>
<div class="t" style="left:1576px;top:210px;font-size:11px">List</div>
<svg class="a" style="left:1428px;top:256px" width="33" height="33" viewBox="0 0 33 33"><path d="M21.16 3.20 A13.8 13.8 0 0 1 26.58 7.14" fill="none" stroke="#0a6ebd" stroke-width="4.6"/><path d="M27.70 8.68 A13.8 13.8 0 0 1 29.77 15.05" fill="none" stroke="#0a6ebd" stroke-width="4.6"/><path d="M29.77 16.95 A13.8 13.8 0 0 1 27.70 23.32" fill="none" stroke="#0a6ebd" stroke-width="4.6"/><path d="M26.58 24.86 A13.8 13.8 0 0 1 21.16 28.80" fill="none" stroke="#0a6ebd" stroke-width="4.6"/><path d="M19.35 29.39 A13.8 13.8 0 0 1 12.65 29.39" fill="none" stroke="#0a6ebd" stroke-width="4.6"/><path d="M10.84 28.80 A13.8 13.8 0 0 1 5.42 24.86" fill="none" stroke="#0a6ebd" stroke-width="4.6"/><path d="M4.30 23.32 A13.8 13.8 0 0 1 2.23 16.95" fill="none" stroke="#0a6ebd" stroke-width="4.6"/><path d="M2.23 15.05 A13.8 13.8 0 0 1 4.30 8.68" fill="none" stroke="#0a6ebd" stroke-width="4.6"/><path d="M5.42 7.14 A13.8 13.8 0 0 1 10.84 3.20" fill="none" stroke="#0a6ebd" stroke-width="4.6"/><path d="M12.65 2.61 A13.8 13.8 0 0 1 19.35 2.61" fill="none" stroke="#0a6ebd" stroke-width="4.6"/><path d="M9.0 12.5 L14.3 21.6 L18.7 16.4z" fill="#000"/><circle cx="16.5" cy="19" r="3.8" fill="#000"/></svg>
<div class="t" style="left:1463px;top:265px;font-size:11px">Meter</div>
<svg class="a" style="left:1579px;top:256px" width="33" height="33" viewBox="0 0 33 33"><path d="M21.16 3.20 A13.8 13.8 0 0 1 26.58 7.14" fill="none" stroke="#0a6ebd" stroke-width="4.6"/><path d="M27.70 8.68 A13.8 13.8 0 0 1 29.77 15.05" fill="none" stroke="#0a6ebd" stroke-width="4.6"/><path d="M29.77 16.95 A13.8 13.8 0 0 1 27.70 23.32" fill="none" stroke="#0a6ebd" stroke-width="4.6"/><path d="M26.58 24.86 A13.8 13.8 0 0 1 21.16 28.80" fill="none" stroke="#0a6ebd" stroke-width="4.6"/><path d="M19.35 29.39 A13.8 13.8 0 0 1 12.65 29.39" fill="none" stroke="#0a6ebd" stroke-width="4.6"/><path d="M10.84 28.80 A13.8 13.8 0 0 1 5.42 24.86" fill="none" stroke="#0a6ebd" stroke-width="4.6"/><path d="M4.30 23.32 A13.8 13.8 0 0 1 2.23 16.95" fill="none" stroke="#0a6ebd" stroke-width="4.6"/><path d="M2.23 15.05 A13.8 13.8 0 0 1 4.30 8.68" fill="none" stroke="#0a6ebd" stroke-width="4.6"/><path d="M5.42 7.14 A13.8 13.8 0 0 1 10.84 3.20" fill="none" stroke="#0a6ebd" stroke-width="4.6"/><path d="M12.65 2.61 A13.8 13.8 0 0 1 19.35 2.61" fill="none" stroke="#0a6ebd" stroke-width="4.6"/><path d="M9.0 12.5 L14.3 21.6 L18.7 16.4z" fill="#000"/><circle cx="16.5" cy="19" r="3.8" fill="#000"/></svg>
<div class="t" style="left:1614px;top:265px;font-size:11px">Gauge</div>
<svg class="a" style="left:1730px;top:256px" width="33" height="33" viewBox="0 0 33 33"><path d="M5.63 25.11 A13.8 13.8 0 0 1 2.67 19.56" fill="none" stroke="#0a6ebd" stroke-width="4.6"/><path d="M2.32 17.81 A13.8 13.8 0 0 1 2.94 11.56" fill="none" stroke="#0a6ebd" stroke-width="4.6"/><path d="M3.62 9.90 A13.8 13.8 0 0 1 7.61 5.05" fill="none" stroke="#0a6ebd" stroke-width="4.6"/><path d="M9.09 4.05 A13.8 13.8 0 0 1 15.11 2.23" fill="none" stroke="#0a6ebd" stroke-width="4.6"/><path d="M16.89 2.23 A13.8 13.8 0 0 1 22.91 4.05" fill="none" stroke="#0a6ebd" stroke-width="4.6"/><path d="M24.39 5.05 A13.8 13.8 0 0 1 28.38 9.90" fill="none" stroke="#0a6ebd" stroke-width="4.6"/><path d="M29.06 11.56 A13.8 13.8 0 0 1 29.68 17.81" fill="none" stroke="#0a6ebd" stroke-width="4.6"/><path d="M29.33 19.56 A13.8 13.8 0 0 1 26.37 25.11" fill="none" stroke="#0a6ebd" stroke-width="4.6"/><path d="M9.0 12.5 L14.3 21.6 L18.7 16.4z" fill="#000"/><circle cx="16.5" cy="19" r="3.8" fill="#000"/></svg>
<div class="t" style="left:1765px;top:265px;font-size:11px">Gauge 270</div>
<svg class="a" style="left:1428px;top:295px" width="33" height="33" viewBox="0 0 33 33"><path d="M2.25 20.18 A13.8 13.8 0 0 1 2.80 14.98" fill="none" stroke="#0a6ebd" stroke-width="4.6"/><path d="M3.30 13.59 A13.8 13.8 0 0 1 6.23 9.26" fill="none" stroke="#0a6ebd" stroke-width="4.6"/><path d="M7.33 8.26 A13.8 13.8 0 0 1 11.95 5.81" fill="none" stroke="#0a6ebd" stroke-width="4.6"/><path d="M13.39 5.45 A13.8 13.8 0 0 1 18.61 5.45" fill="none" stroke="#0a6ebd" stroke-width="4.6"/><path d="M20.05 5.81 A13.8 13.8 0 0 1 24.67 8.26" fill="none" stroke="#0a6ebd" stroke-width="4.6"/><path d="M25.77 9.26 A13.8 13.8 0 0 1 28.70 13.59" fill="none" stroke="#0a6ebd" stroke-width="4.6"/><path d="M29.20 14.98 A13.8 13.8 0 0 1 29.75 20.18" fill="none" stroke="#0a6ebd" stroke-width="4.6"/><path d="M9.0 15.5 L14.1 25.4 L18.9 20.6z" fill="#000"/><circle cx="16.5" cy="23" r="3.8" fill="#000"/></svg>
<div class="t" style="left:1463px;top:304px;font-size:11px">Gauge 180</div>
<svg class="a" style="left:1579px;top:295px" width="33" height="33" viewBox="0 0 33 33"><path d="M7.10 5.50 A17.5 17.5 0 0 1 12.08 6.25" fill="none" stroke="#0a6ebd" stroke-width="4.6"/><path d="M13.42 6.72 A17.5 17.5 0 0 1 17.79 9.22" fill="none" stroke="#0a6ebd" stroke-width="4.6"/><path d="M18.87 10.15 A17.5 17.5 0 0 1 22.04 14.06" fill="none" stroke="#0a6ebd" stroke-width="4.6"/><path d="M22.72 15.31 A17.5 17.5 0 0 1 24.26 20.10" fill="none" stroke="#0a6ebd" stroke-width="4.6"/><path d="M24.44 21.51 A17.5 17.5 0 0 1 24.14 26.54" fill="none" stroke="#0a6ebd" stroke-width="4.6"/><path d="M6.0 16.5 L9.1 25.3 L14.3 20.7z" fill="#000"/><circle cx="11.7" cy="23" r="3.8" fill="#000"/></svg>
<div class="t" style="left:1614px;top:304px;font-size:11px">Gauge 90</div>
<svg class="a" style="left:1730px;top:295px" width="33" height="33" viewBox="0 0 33 33"><path d="M1.5 25 A14.5 14.5 0 0 1 30.5 25 H23 A7 7 0 0 0 9 25 Z" fill="#fff" stroke="#000" stroke-width="2.2" stroke-linejoin="round"/><path d="M2.6 24 A13.5 13.5 0 0 1 16 11.5 V17 A8 8 0 0 0 8 24z" fill="#0a6ebd"/></svg>
<div class="t" style="left:1765px;top:304px;font-size:11px">Arched Bargraph</div>
<svg class="a" style="left:1428px;top:334px" width="33" height="33" viewBox="0 0 33 33"><path d="M1.5 0 V31 H31" fill="none" stroke="#000" stroke-width="2.2"/><rect x="4" y="16" width="7" height="13.5" fill="#000"/><rect x="13" y="5" width="6" height="24.5" fill="#0a6ebd"/><rect x="21" y="12" width="8" height="17.5" fill="#000"/></svg>
<div class="t" style="left:1463px;top:343px;font-size:11px">Linear Bargraph</div>
<svg class="a" style="left:1579px;top:334px" width="33" height="33" viewBox="0 0 33 33"><path d="M1.5 1 V30.5 H31" fill="none" stroke="#000" stroke-width="2.2"/><path d="M5 22 L12 14 L16 18 L25 8" fill="none" stroke="#0a6ebd" stroke-width="3.2"/><path d="M20 5 L28 4 L27 12z" fill="#0a6ebd"/></svg>
<div class="t" style="left:1614px;top:343px;font-size:11px">Graph</div>
<svg class="a" style="left:1428px;top:389px" width="33" height="33" viewBox="0 0 33 33"><path d="M0 10.5h7M0 14h7M0 17.5h7M0 21h7" stroke="#222" stroke-width="1.4"/><rect x="10" y="6" width="3" height="19" fill="#0a6ebd"/><path d="M14.5 6.5 H21 A9.5 9.5 0 0 1 21 25 H14.5z" fill="none" stroke="#0a6ebd" stroke-width="2.6"/></svg>
<div class="t" style="left:1463px;top:398px;font-size:11px">Lamp</div>
<svg class="a" style="left:1541px;top:389px" width="33" height="33" viewBox="0 0 33 33"><path d="M9.5 6.5 A12.5 12.5 0 1 0 21.5 6.5" fill="none" stroke="#0a6ebd" stroke-width="2.6"/><path d="M15.5 -1 V13" stroke="#000" stroke-width="2.6"/></svg>
<div class="t" style="left:1576px;top:398px;font-size:11px">Power Switch</div>
<svg class="a" style="left:1654px;top:389px" width="33" height="33" viewBox="0 0 33 33"><circle cx="16" cy="16" r="14" fill="none" stroke="#0a6ebd" stroke-width="3"/><circle cx="16" cy="16" r="8.5" fill="#000"/></svg>
<div class="t" style="left:1689px;top:398px;font-size:11px">Push Switch</div>
<svg class="a" style="left:1767px;top:389px" width="33" height="33" viewBox="0 0 33 33"><rect x="1" y="9" width="31" height="16" rx="1.5" fill="#0a6ebd"/><rect x="2" y="10" width="14" height="14" fill="#f8f8f8"/><rect x="21" y="14" width="1.5" height="5" fill="#000"/><rect x="23.5" y="14" width="1.5" height="5" fill="#000"/></svg>
<div class="t" style="left:1802px;top:398px;font-size:11px">Rocker Switch</div>
<!--/PAL-->
<!--PROPS-->
<div class="a" style="left:1424px;top:438px;width:169px;height:21px;background:#ebf4fd;border:2px solid #5d9bd8;border-bottom:none"></div>
<div class="t" style="left:1430px;top:442px;font-size:11.5px;font-weight:bold">SoftKey 1 [61] - Properties</div>
<svg class="a" style="left:1579px;top:445px" width="9" height="8" viewBox="0 0 9.3 8.5"><path d="M0.6 0.6 L8.7 7.9 M8.7 0.6 L0.6 7.9" stroke="#3a3a3a" stroke-width="1.25"/></svg>
<div class="min" style="left:1880px;top:448px"></div>
<div class="t" style="left:1433px;top:463px;font-size:11px">Properties</div>
<div class="a" style="left:1490px;top:461px;width:62px;height:18px;background:#cce4f7;border:1px solid #99c9ef"></div>
<div class="t" style="left:1504px;top:463px;font-size:11px">Events</div>
<div class="a" style="left:1425px;top:482px;width:472px;height:1px;background:#a0a0a0"></div>
<div class="a" style="left:1425px;top:483px;width:472px;height:405px;background:#fff"></div>
<div class="a" style="left:1425px;top:483px;width:472px;height:18px;background:#d5d5d5"></div>
<div class="a" style="left:1426px;top:487px;width:9px;height:9px;border:1px solid #919191;background:#fff"><div class="a" style="left:1px;top:3px;width:5px;height:1px;background:#3a4fa0"></div></div>
<div class="t" style="left:1437px;top:485px;font-size:11px">Events</div>
<div class="t" style="left:1427px;top:503px;font-size:11px;color:#000">OnPress</div>
<div class="t" style="left:1663px;top:502px;font-size:11px;color:#000">No Action</div>
<div class="a" style="left:1425px;top:518px;width:472px;height:1px;background:#dcdcdc"></div>
<div class="a" style="left:1882px;top:502px;width:13px;height:15px;background:#e1e1e1;border:1px solid #adadad"><div class="a" style="left:2px;top:10px;width:2px;height:2px;background:#111"></div><div class="a" style="left:5px;top:10px;width:2px;height:2px;background:#111"></div><div class="a" style="left:8px;top:10px;width:2px;height:2px;background:#111"></div></div>
<div class="a" style="left:1425px;top:519px;width:455px;height:17px;background:#3169c6"></div>
<div class="a" style="left:1660px;top:519px;width:1px;height:17px;background:#fff"></div>
<div class="t" style="left:1427px;top:521px;font-size:11px;color:#000">OnRelease</div>
<div class="t" style="left:1663px;top:520px;font-size:11px;color:#fff">No Action</div>
<div class="a" style="left:1425px;top:536px;width:472px;height:1px;background:#dcdcdc"></div>
<div class="a" style="left:1882px;top:520px;width:13px;height:15px;background:#e1e1e1;border:1px solid #adadad"><div class="a" style="left:2px;top:10px;width:2px;height:2px;background:#111"></div><div class="a" style="left:5px;top:10px;width:2px;height:2px;background:#111"></div><div class="a" style="left:8px;top:10px;width:2px;height:2px;background:#111"></div></div>
<div class="t" style="left:1427px;top:539px;font-size:11px;color:#000">OnLongPress</div>
<div class="t" style="left:1663px;top:538px;font-size:11px;color:#000">No Action</div>
<div class="a" style="left:1425px;top:554px;width:472px;height:1px;background:#dcdcdc"></div>
<div class="a" style="left:1882px;top:538px;width:13px;height:15px;background:#e1e1e1;border:1px solid #adadad"><div class="a" style="left:2px;top:10px;width:2px;height:2px;background:#111"></div><div class="a" style="left:5px;top:10px;width:2px;height:2px;background:#111"></div><div class="a" style="left:8px;top:10px;width:2px;height:2px;background:#111"></div></div>
<div class="t" style="left:1427px;top:557px;font-size:11px;color:#000">OnLongRelease</div>
<div class="t" style="left:1663px;top:556px;font-size:11px;color:#000">No Action</div>
<div class="a" style="left:1425px;top:572px;width:472px;height:1px;background:#dcdcdc"></div>
<div class="a" style="left:1882px;top:556px;width:13px;height:15px;background:#e1e1e1;border:1px solid #adadad"><div class="a" style="left:2px;top:10px;width:2px;height:2px;background:#111"></div><div class="a" style="left:5px;top:10px;width:2px;height:2px;background:#111"></div><div class="a" style="left:8px;top:10px;width:2px;height:2px;background:#111"></div></div>
<div class="t" style="left:1427px;top:575px;font-size:11px;color:#000">OnDblClick</div>
<div class="t" style="left:1663px;top:574px;font-size:11px;color:#000">No Action</div>
<div class="a" style="left:1425px;top:590px;width:472px;height:1px;background:#dcdcdc"></div>
<div class="a" style="left:1882px;top:574px;width:13px;height:15px;background:#e1e1e1;border:1px solid #adadad"><div class="a" style="left:2px;top:10px;width:2px;height:2px;background:#111"></div><div class="a" style="left:5px;top:10px;width:2px;height:2px;background:#111"></div><div class="a" style="left:8px;top:10px;width:2px;height:2px;background:#111"></div></div>
<div class="a" style="left:1660px;top:501px;width:1px;height:18px;background:#dcdcdc"></div>
<div class="a" style="left:1660px;top:537px;width:1px;height:54px;background:#dcdcdc"></div>
<div class="a" style="left:1425px;top:888px;width:472px;height:4px;background:#e8e8e8;border-bottom:1px solid #9a9a9a"></div>
<div class="t" style="left:1427px;top:900px;font-size:11.5px;font-weight:bold">OnRelease</div>
<svg class="a" style="left:1875px;top:897px" width="17" height="17" viewBox="0 0 17 17"><circle cx="8.5" cy="8.5" r="7.5" fill="#8f8f8f"/><text x="8.5" y="12.5" font-family="Liberation Sans" font-weight="bold" font-size="11" fill="#b8b8b8" text-anchor="middle">?</text></svg>
<div class="t" style="left:1903px;top:77px;font-size:10.2px;transform-origin:0 0;transform:translate(13px,0) rotate(90deg)">Symbol Library</div>
<div class="a" style="left:1782px;top:960px;width:1px;height:13px;background:#a0a0a0"></div>
<div class="a" style="left:1893px;top:960px;width:1px;height:13px;background:#a0a0a0"></div>
<svg class="a" style="left:233px;top:224px" width="36" height="36" viewBox="0 0 36 36"><defs><radialGradient id="bd63" cx="0.5" cy="0.45" r="0.6"><stop offset="0" stop-color="#e8292b"/><stop offset="0.85" stop-color="#da2225"/><stop offset="1" stop-color="#c0181b"/></radialGradient></defs><circle cx="18" cy="18.5" r="15" fill="#000" opacity="0.18"/><circle cx="18" cy="17" r="14" fill="url(#bd63)" stroke="#b8181a" stroke-width="0.8"/><text x="18" y="22.5" font-family="Liberation Sans" font-weight="bold" font-size="15" fill="#fff" text-anchor="middle" textLength="17" lengthAdjust="spacingAndGlyphs">63</text></svg>
<svg class="a" style="left:1503px;top:431px" width="36" height="36" viewBox="0 0 36 36"><defs><radialGradient id="bd64" cx="0.5" cy="0.45" r="0.6"><stop offset="0" stop-color="#e8292b"/><stop offset="0.85" stop-color="#da2225"/><stop offset="1" stop-color="#c0181b"/></radialGradient></defs><circle cx="18" cy="18.5" r="15" fill="#000" opacity="0.18"/><circle cx="18" cy="17" r="14" fill="url(#bd64)" stroke="#b8181a" stroke-width="0.8"/><text x="18" y="22.5" font-family="Liberation Sans" font-weight="bold" font-size="15" fill="#fff" text-anchor="middle" textLength="17" lengthAdjust="spacingAndGlyphs">64</text></svg>
<svg class="a" style="left:1842px;top:512px" width="36" height="36" viewBox="0 0 36 36"><defs><radialGradient id="bd65" cx="0.5" cy="0.45" r="0.6"><stop offset="0" stop-color="#e8292b"/><stop offset="0.85" stop-color="#da2225"/><stop offset="1" stop-color="#c0181b"/></radialGradient></defs><circle cx="18" cy="18.5" r="15" fill="#000" opacity="0.18"/><circle cx="18" cy="17" r="14" fill="url(#bd65)" stroke="#b8181a" stroke-width="0.8"/><text x="18" y="22.5" font-family="Liberation Sans" font-weight="bold" font-size="15" fill="#fff" text-anchor="middle" textLength="17" lengthAdjust="spacingAndGlyphs">65</text></svg>
<!--/PROPS-->
<!--SAT-->
<div class="a" style="left:4px;top:760px;width:382px;height:188px;border:1px solid #000;background:#d8d8d8"></div>
<svg class="a" style="left:5px;top:761px" width="380" height="186" viewBox="5 761 380 186">
<defs><filter id="satf" color-interpolation-filters="sRGB"><feColorMatrix type="saturate" values="0.75"/><feComponentTransfer><feFuncR type="gamma" amplitude="0.51" exponent="1.5" offset="0.37"/><feFuncG type="gamma" amplitude="0.51" exponent="1.5" offset="0.37"/><feFuncB type="gamma" amplitude="0.51" exponent="1.5" offset="0.37"/></feComponentTransfer></filter></defs>
<g filter="url(#satf)"><g transform="translate(-141,716.3) scale(0.371)">

<path d="M455 132 C600 124 760 118 900 118 C1050 118 1200 125 1324 133 C1355 136 1373 155 1378 182 L1383 260 L1384 400 L1382 500 C1380 545 1372 568 1352 582 C1340 590 1320 594 1300 595 C1150 602 1000 607 900 607 C780 607 600 602 457 595 C432 592 416 578 408 566 C401 553 399 540 398 520 L393 360 L396 240 C397 200 399 172 410 155 C420 141 435 133 455 132 Z" fill="url(#body)"/>
<path d="M420 150 C440 136 470 134 520 130 C700 121 1000 119 1310 136 C1345 140 1362 160 1368 190" fill="none" stroke="#555" stroke-width="2.5" opacity="0.55"/>
<path d="M424 206 C428 198 433 194 445 193 C600 184 780 177 900 177 C1100 178 1250 185 1342 191 C1358 194 1361 208 1362 230 L1364 520" fill="none" stroke="#1c1c1c" stroke-width="11" opacity="0.7" stroke-linecap="round"/>
<path d="M412 538 C600 544 780 548 900 548 C1050 548 1200 544 1350 538" fill="none" stroke="#4a4a4a" stroke-width="6" opacity="0.6"/>
<path d="M438 199 C600 190 780 184 900 184 C1050 184 1200 189 1340 197 C1349 198 1353 203 1353 212 L1353 518 C1353 527 1348 530 1338 531 C1200 538 1050 544 900 544 C780 544 600 538 438 533 C429 532 423 527 423 518 L424 212 C424 204 429 200 438 199 Z" fill="url(#rim)"/>
<path d="M445 208 C600 200 780 194 900 194 C1050 194 1200 199 1334 206 C1342 207 1347 210 1347 218 L1347 514 C1347 522 1343 525 1334 525 C1200 529 1050 533 900 533 C780 533 600 530 445 526 C436 526 431 522 431 514 L432 218 C432 211 437 208 445 208 Z" fill="url(#face)"/>
<path d="M450 205 H515 C522 205 527 212 527 222 V508 C527 517 521 522 512 522 H452 C441 522 435 516 435 506 V222 C435 211 441 205 450 205 Z" fill="url(#panelL)" stroke="#4a4a4a" stroke-width="0.8"/>
<path d="M1032 204 H1330 C1339 204 1345 209 1345 218 V510 C1345 518 1340 523 1330 523 H1032 C1024 523 1019 517 1019 508 V220 C1019 210 1024 204 1032 204 Z" fill="#353535" stroke="#4a4a4a" stroke-width="0.8"/>
<path d="M1040 208 C1055 280 1050 420 1045 520" stroke="#444" stroke-width="1.2" fill="none"/>
<path d="M508 208 C500 280 495 420 505 520" stroke="#404040" stroke-width="1.2" fill="none"/>
<rect x="525.5" y="219" width="493" height="289" fill="#000"/>
<rect x="533" y="227.5" width="480" height="272.5" fill="url(#scr)"/>
<rect x="539" y="233" width="468" height="263" rx="13" fill="#19181b"/>
<rect x="587" y="240.7" width="372" height="247" rx="8" fill="url(#scr)"/>
<rect x="538" y="283" width="50" height="19" fill="#c5d3ea"/>
<rect x="958" y="283" width="50" height="19" fill="#c4d3eb"/>
<rect x="538" y="354.5" width="50" height="21.5" fill="#c5d3ea"/>
<rect x="958" y="354.5" width="50" height="21.5" fill="#c4d3eb"/>
<rect x="538" y="428.5" width="50" height="17.5" fill="#c5d3ea"/>
<rect x="958" y="428.5" width="50" height="17.5" fill="#c4d3eb"/>
<rect x="612" y="232" width="6" height="9" fill="#dfe7f4"/>
<rect x="612" y="487" width="6" height="10" fill="#dfe7f4"/>
<rect x="927.8" y="232" width="5.600000000000023" height="9" fill="#dfe7f4"/>
<rect x="927.8" y="487" width="5.600000000000023" height="10" fill="#dfe7f4"/>
<path d="M558 275.2 H573 A9.1 9.1 0 0 0 573 257 H568" fill="none" stroke="#e2e2e2" stroke-width="6.8"/>
<path d="M558 257.2 L570 249 L570 265.6 Z" fill="#e2e2e2"/>
<rect x="532.5" y="227.5" width="69.5" height="69.5" fill="none" stroke="#1fe01f" stroke-width="2"/>
<path d="M533.5 297 V499.5 H600.5 V228" fill="none" stroke="#fff" stroke-width="1" stroke-dasharray="3 2"/>
<rect x="945.5" y="228" width="67" height="271.5" fill="none" stroke="#22e022" stroke-width="1" stroke-dasharray="3 2"/>
<g fill="#0a6ebd" stroke="none"><path d="M670.5 274.5 L673.5 277.5 L692 259 L689 256z"/><path d="M686 254.5 L691 249.5 L689 247.5 L691.5 245 L698 251 L702.5 258 L701 263 L697.5 259 L694 262.5z"/><path d="M674 254 L676.5 251.5 L698 273 L695.5 275.5z"/><circle cx="672.8" cy="252.3" r="4.6"/><circle cx="697.5" cy="277.2" r="4.6"/></g>
<path d="M667 247.5 L670 250.5 L673 249 L671.5 246z" fill="#e6ecf7"/><path d="M703 283 L700 280 L697.5 281.5 L699 284.5z" fill="#eef2f9"/>
<text x="722.8" y="272.8" font-family="Liberation Sans" font-weight="bold" font-size="24" letter-spacing="2.1" fill="#0a6ebd" stroke="#0a6ebd" stroke-width="1.6" stroke-linejoin="round">SETTINGS</text>
<g font-family="Liberation Sans" font-weight="bold" font-size="11" fill="#5a5a5a" text-anchor="middle">
<text x="772.5" y="297.5">0</text>
<text x="805.5" y="297.5">20</text>
<text x="838.5" y="297.5">40</text>
<text x="871.5" y="297.5">60</text>
<text x="904.5" y="297.5">80</text>
<text x="939" y="297.5">100%</text>
</g>
<circle cx="789" cy="293.5" r="1.5" fill="#5a5a5a"/>
<circle cx="822" cy="293.5" r="1.5" fill="#5a5a5a"/>
<circle cx="855" cy="293.5" r="1.5" fill="#5a5a5a"/>
<circle cx="887.5" cy="293.5" r="1.5" fill="#5a5a5a"/>
<circle cx="920" cy="293.5" r="1.5" fill="#5a5a5a"/>
<rect x="772.2" y="305.7" width="1.8" height="175" fill="#6e6e6e"/>
<rect x="788.6" y="305.7" width="1.8" height="175" fill="#6e6e6e"/>
<rect x="805.0" y="305.7" width="1.8" height="175" fill="#6e6e6e"/>
<rect x="821.4" y="305.7" width="1.8" height="175" fill="#6e6e6e"/>
<rect x="837.8" y="305.7" width="1.8" height="175" fill="#6e6e6e"/>
<rect x="854.2" y="305.7" width="1.8" height="175" fill="#6e6e6e"/>
<rect x="870.6" y="305.7" width="1.8" height="175" fill="#6e6e6e"/>
<rect x="887.0" y="305.7" width="1.8" height="175" fill="#6e6e6e"/>
<rect x="903.4" y="305.7" width="1.8" height="175" fill="#6e6e6e"/>
<rect x="919.8" y="305.7" width="1.8" height="175" fill="#6e6e6e"/>
<rect x="936.2" y="305.7" width="1.8" height="175" fill="#6e6e6e"/>
<text x="600" y="354" font-family="Liberation Sans" font-weight="bold" font-size="19.8" fill="#5c5c5c">Display-Backlight</text>
<text x="600" y="428.3" font-family="Liberation Sans" font-weight="bold" font-size="19.8" fill="#5c5c5c">Key-Backlight</text>
<path d="M522 237 H442.5 L440.5 287 H522" fill="none" stroke="#f2f2f2" stroke-width="2.3" stroke-linejoin="round"/>
<path d="M462 252.5 L472.5 262.5 L462 272.5" fill="none" stroke="#f4f4f4" stroke-width="2.3"/>
<path d="M522 304.7 H439.7 L438.3 354 H522" fill="none" stroke="#f2f2f2" stroke-width="2.3" stroke-linejoin="round"/>
<path d="M458 320 L468.5 330 L458 340" fill="none" stroke="#f4f4f4" stroke-width="2.3"/>
<path d="M522 372.4 H438 L439.7 422 H522" fill="none" stroke="#f2f2f2" stroke-width="2.3" stroke-linejoin="round"/>
<path d="M458 388 L468.5 398 L458 408" fill="none" stroke="#f4f4f4" stroke-width="2.3"/>
<path d="M522 440 H441 L442.5 489.8 H522" fill="none" stroke="#f2f2f2" stroke-width="2.3" stroke-linejoin="round"/>
<path d="M462 456 L472.5 466 L462 476" fill="none" stroke="#f4f4f4" stroke-width="2.3"/>
<path d="M1022 237 H1111.3 L1114.3 287 H1022" fill="none" stroke="#f2f2f2" stroke-width="2.3" stroke-linejoin="round"/>
<path d="M1089.5 252.5 L1079 262.5 L1089.5 272.5" fill="none" stroke="#f4f4f4" stroke-width="2.3"/>
<path d="M1022 304.7 H1114.7 L1115.7 354 H1022" fill="none" stroke="#f2f2f2" stroke-width="2.3" stroke-linejoin="round"/>
<path d="M1097.5 320 L1087 330 L1097.5 340" fill="none" stroke="#f4f4f4" stroke-width="2.3"/>
<path d="M1022 372.4 H1114.7 L1115.7 422 H1022" fill="none" stroke="#f2f2f2" stroke-width="2.3" stroke-linejoin="round"/>
<path d="M1097.5 388 L1087 398 L1097.5 408" fill="none" stroke="#f4f4f4" stroke-width="2.3"/>
<path d="M1022 440 H1113 L1113 489.8 H1022" fill="none" stroke="#f2f2f2" stroke-width="2.3" stroke-linejoin="round"/>
<path d="M1089.5 456 L1079 466 L1089.5 476" fill="none" stroke="#f4f4f4" stroke-width="2.3"/>
<circle cx="1141" cy="242" r="7.5" fill="#f5f5f5"/>
<path d="M1138.6 264.5 A5.2 5.2 0 1 0 1145.8 264.5" fill="none" stroke="#f0f0f0" stroke-width="2.3"/><path d="M1142.2 261.5 V268.5" stroke="#f0f0f0" stroke-width="2.3"/>
<path d="M1137 296 H1149.5 M1140.5 296 L1143.5 293 H1146 M1142.5 296 L1145 299 H1147.5" fill="none" stroke="#e8e8e8" stroke-width="1.2"/><circle cx="1137.5" cy="296" r="1.6" fill="#e8e8e8"/><path d="M1148.5 294.3 L1151 296 L1148.5 297.7z" fill="#e8e8e8"/><rect x="1146" y="292" width="2" height="2" fill="#e8e8e8"/>
<path d="M1152.2 330.3 V325 A5.3 5.3 0 0 0 1146.9 330.3z" fill="#f0f0f0"/><path d="M1143 330.3 A9.2 9.2 0 0 1 1152.2 321.1" fill="none" stroke="#f0f0f0" stroke-width="2.2"/><path d="M1138 330.3 A14.2 14.2 0 0 1 1152.2 316.1" fill="none" stroke="#f0f0f0" stroke-width="2.2"/>
<rect x="1137" y="342" width="15.6" height="16" fill="#f8f8f8"/>
<circle cx="1251" cy="282" r="74.3" fill="#2a2a2a" stroke="#ececec" stroke-width="3.6"/>
<circle cx="1251" cy="282" r="71.5" fill="#1f1f1f"/>
<line x1="1302.7" y1="287.4" x2="1317.6" y2="289.0" stroke="#2c2c2c" stroke-width="8.5" stroke-linecap="round"/>
<line x1="1300.2" y1="298.8" x2="1314.4" y2="303.7" stroke="#2c2c2c" stroke-width="8.5" stroke-linecap="round"/>
<line x1="1295.2" y1="309.3" x2="1308.0" y2="317.2" stroke="#2c2c2c" stroke-width="8.5" stroke-linecap="round"/>
<line x1="1288.0" y1="318.5" x2="1298.7" y2="329.0" stroke="#2c2c2c" stroke-width="8.5" stroke-linecap="round"/>
<line x1="1279.0" y1="325.8" x2="1287.1" y2="338.5" stroke="#2c2c2c" stroke-width="8.5" stroke-linecap="round"/>
<line x1="1268.5" y1="331.0" x2="1273.6" y2="345.1" stroke="#2c2c2c" stroke-width="8.5" stroke-linecap="round"/>
<line x1="1257.2" y1="333.6" x2="1259.0" y2="348.5" stroke="#2c2c2c" stroke-width="8.5" stroke-linecap="round"/>
<line x1="1245.6" y1="333.7" x2="1244.0" y2="348.6" stroke="#2c2c2c" stroke-width="8.5" stroke-linecap="round"/>
<line x1="1234.2" y1="331.2" x2="1229.3" y2="345.4" stroke="#2c2c2c" stroke-width="8.5" stroke-linecap="round"/>
<line x1="1223.7" y1="326.2" x2="1215.8" y2="339.0" stroke="#2c2c2c" stroke-width="8.5" stroke-linecap="round"/>
<line x1="1214.5" y1="319.0" x2="1204.0" y2="329.7" stroke="#2c2c2c" stroke-width="8.5" stroke-linecap="round"/>
<line x1="1207.2" y1="310.0" x2="1194.5" y2="318.1" stroke="#2c2c2c" stroke-width="8.5" stroke-linecap="round"/>
<line x1="1202.0" y1="299.5" x2="1187.9" y2="304.6" stroke="#2c2c2c" stroke-width="8.5" stroke-linecap="round"/>
<line x1="1199.4" y1="288.2" x2="1184.5" y2="290.0" stroke="#2c2c2c" stroke-width="8.5" stroke-linecap="round"/>
<line x1="1199.3" y1="276.6" x2="1184.4" y2="275.0" stroke="#343434" stroke-width="8.5" stroke-linecap="round"/>
<line x1="1201.8" y1="265.2" x2="1187.6" y2="260.3" stroke="#343434" stroke-width="8.5" stroke-linecap="round"/>
<line x1="1206.8" y1="254.7" x2="1194.0" y2="246.8" stroke="#343434" stroke-width="8.5" stroke-linecap="round"/>
<line x1="1199.1" y1="256.1" x2="1192.0" y2="252.5" stroke="#4a4a4a" stroke-width="1"/>
<line x1="1214.0" y1="245.5" x2="1203.3" y2="235.0" stroke="#343434" stroke-width="8.5" stroke-linecap="round"/>
<line x1="1206.2" y1="245.2" x2="1200.0" y2="240.1" stroke="#4a4a4a" stroke-width="1"/>
<line x1="1223.0" y1="238.2" x2="1214.9" y2="225.5" stroke="#343434" stroke-width="8.5" stroke-linecap="round"/>
<line x1="1215.5" y1="236.1" x2="1210.6" y2="229.8" stroke="#4a4a4a" stroke-width="1"/>
<line x1="1233.5" y1="233.0" x2="1228.4" y2="218.9" stroke="#343434" stroke-width="8.5" stroke-linecap="round"/>
<line x1="1226.6" y1="229.4" x2="1223.2" y2="222.1" stroke="#4a4a4a" stroke-width="1"/>
<line x1="1244.8" y1="230.4" x2="1243.0" y2="215.5" stroke="#343434" stroke-width="8.5" stroke-linecap="round"/>
<line x1="1238.9" y1="225.3" x2="1237.3" y2="217.4" stroke="#4a4a4a" stroke-width="1"/>
<line x1="1256.4" y1="230.3" x2="1258.0" y2="215.4" stroke="#343434" stroke-width="8.5" stroke-linecap="round"/>
<line x1="1251.9" y1="224.0" x2="1252.0" y2="216.0" stroke="#4a4a4a" stroke-width="1"/>
<line x1="1267.8" y1="232.8" x2="1272.7" y2="218.6" stroke="#343434" stroke-width="8.5" stroke-linecap="round"/>
<line x1="1264.7" y1="225.7" x2="1266.6" y2="217.9" stroke="#4a4a4a" stroke-width="1"/>
<line x1="1278.3" y1="237.8" x2="1286.2" y2="225.0" stroke="#343434" stroke-width="8.5" stroke-linecap="round"/>
<line x1="1276.9" y1="230.1" x2="1280.5" y2="223.0" stroke="#4a4a4a" stroke-width="1"/>
<line x1="1287.5" y1="245.0" x2="1298.0" y2="234.3" stroke="#343434" stroke-width="8.5" stroke-linecap="round"/>
<line x1="1287.8" y1="237.2" x2="1292.9" y2="231.0" stroke="#4a4a4a" stroke-width="1"/>
<line x1="1294.8" y1="254.0" x2="1307.5" y2="245.9" stroke="#343434" stroke-width="8.5" stroke-linecap="round"/>
<line x1="1296.9" y1="246.5" x2="1303.2" y2="241.6" stroke="#4a4a4a" stroke-width="1"/>
<line x1="1300.0" y1="264.5" x2="1314.1" y2="259.4" stroke="#343434" stroke-width="8.5" stroke-linecap="round"/>
<line x1="1302.6" y1="275.8" x2="1317.5" y2="274.0" stroke="#343434" stroke-width="8.5" stroke-linecap="round"/>
<circle cx="1251" cy="282" r="47" fill="#262626" stroke="#1c1c1c" stroke-width="1.5"/>
<circle cx="1251" cy="282" r="42.5" fill="#2b2b2b" stroke="#303030" stroke-width="1"/>
<rect x="1140.5" y="373.5" width="49" height="49" rx="2" fill="none" stroke="#f4f4f4" stroke-width="2.6"/>
<rect x="1213.5" y="373.5" width="49" height="49" rx="2" fill="none" stroke="#f4f4f4" stroke-width="2.6"/>
<path d="M1139 441.5 H1186.5 L1185.5 489.5 H1138z" fill="none" stroke="#f4f4f4" stroke-width="2.6" stroke-linejoin="round"/>
<path d="M1151.7 388.6 A16.5 16.5 0 0 1 1168.1 381.9" fill="none" stroke="#f4f4f4" stroke-width="3.6"/>
<path d="M1174.0 383.3 L1167.6 376.0 L1165.0 386.7z" fill="#f4f4f4"/>
<path d="M1180.2 391.1 A16.5 16.5 0 0 1 1177.8 408.7" fill="none" stroke="#f4f4f4" stroke-width="3.6"/>
<path d="M1173.6 413.2 L1183.1 411.2 L1175.2 403.6z" fill="#f4f4f4"/>
<path d="M1163.8 414.5 A16.5 16.5 0 0 1 1149.7 403.7" fill="none" stroke="#f4f4f4" stroke-width="3.6"/>
<path d="M1148.0 397.8 L1144.9 407.0 L1155.5 404.0z" fill="#f4f4f4"/>
<circle cx="1150.1" cy="391.4" r="2.3" fill="#f4f4f4"/>
<circle cx="1178.5" cy="388.4" r="2.3" fill="#f4f4f4"/>
<circle cx="1166.9" cy="414.5" r="2.3" fill="#f4f4f4"/>
<circle cx="1237.5" cy="397.7" r="3.8" fill="#f4f4f4"/>
<line x1="1217.5" y1="377.7" x2="1229.5" y2="389.7" stroke="#f4f4f4" stroke-width="2.8"/>
<path d="M1233.0 393.2 L1224.0 390.2 L1230.0 384.2z" fill="#f4f4f4"/>
<line x1="1217.5" y1="417.7" x2="1229.5" y2="405.7" stroke="#f4f4f4" stroke-width="2.8"/>
<path d="M1233.0 402.2 L1224.0 405.2 L1230.0 411.2z" fill="#f4f4f4"/>
<line x1="1257.5" y1="377.7" x2="1245.5" y2="389.7" stroke="#f4f4f4" stroke-width="2.8"/>
<path d="M1242.0 393.2 L1251.0 390.2 L1245.0 384.2z" fill="#f4f4f4"/>
<line x1="1257.5" y1="417.7" x2="1245.5" y2="405.7" stroke="#f4f4f4" stroke-width="2.8"/>
<path d="M1242.0 402.2 L1251.0 405.2 L1245.0 411.2z" fill="#f4f4f4"/>
<path d="M1147.8 464 A16.5 16.5 0 1 1 1163.8 481.5" fill="none" stroke="#f4f4f4" stroke-width="3.8"/>
<path d="M1140.8 463 L1153.3 461 L1146.8 471z" fill="#f4f4f4"/>
<circle cx="1151.3999999999999" cy="478.2" r="4" fill="#eaeaea"/>
<line x1="1210" y1="442" x2="1206" y2="522" stroke="#9a9a9a" stroke-width="1.6"/><circle cx="1210" cy="442" r="3.2" fill="#a5a5a5"/>
<path d="M1217 512 C1226 468 1252 446 1276 446 C1300 446 1324 468 1330 512 C1331 518 1326 519 1318 519 H1228 C1220 519 1216 518 1217 512 Z" fill="url(#hump)"/>
<path d="M1219 511 C1250 506 1300 506 1329 511 C1330 516 1326 519 1318 519 H1228 C1221 519 1217 517 1219 511 Z" fill="#1a1a1a"/>

</g></g><rect x="56.5" y="800.5" width="26" height="26" fill="none" stroke="#4fdc4f" stroke-width="1"/></svg>
<!--/SAT-->
</body></html>
